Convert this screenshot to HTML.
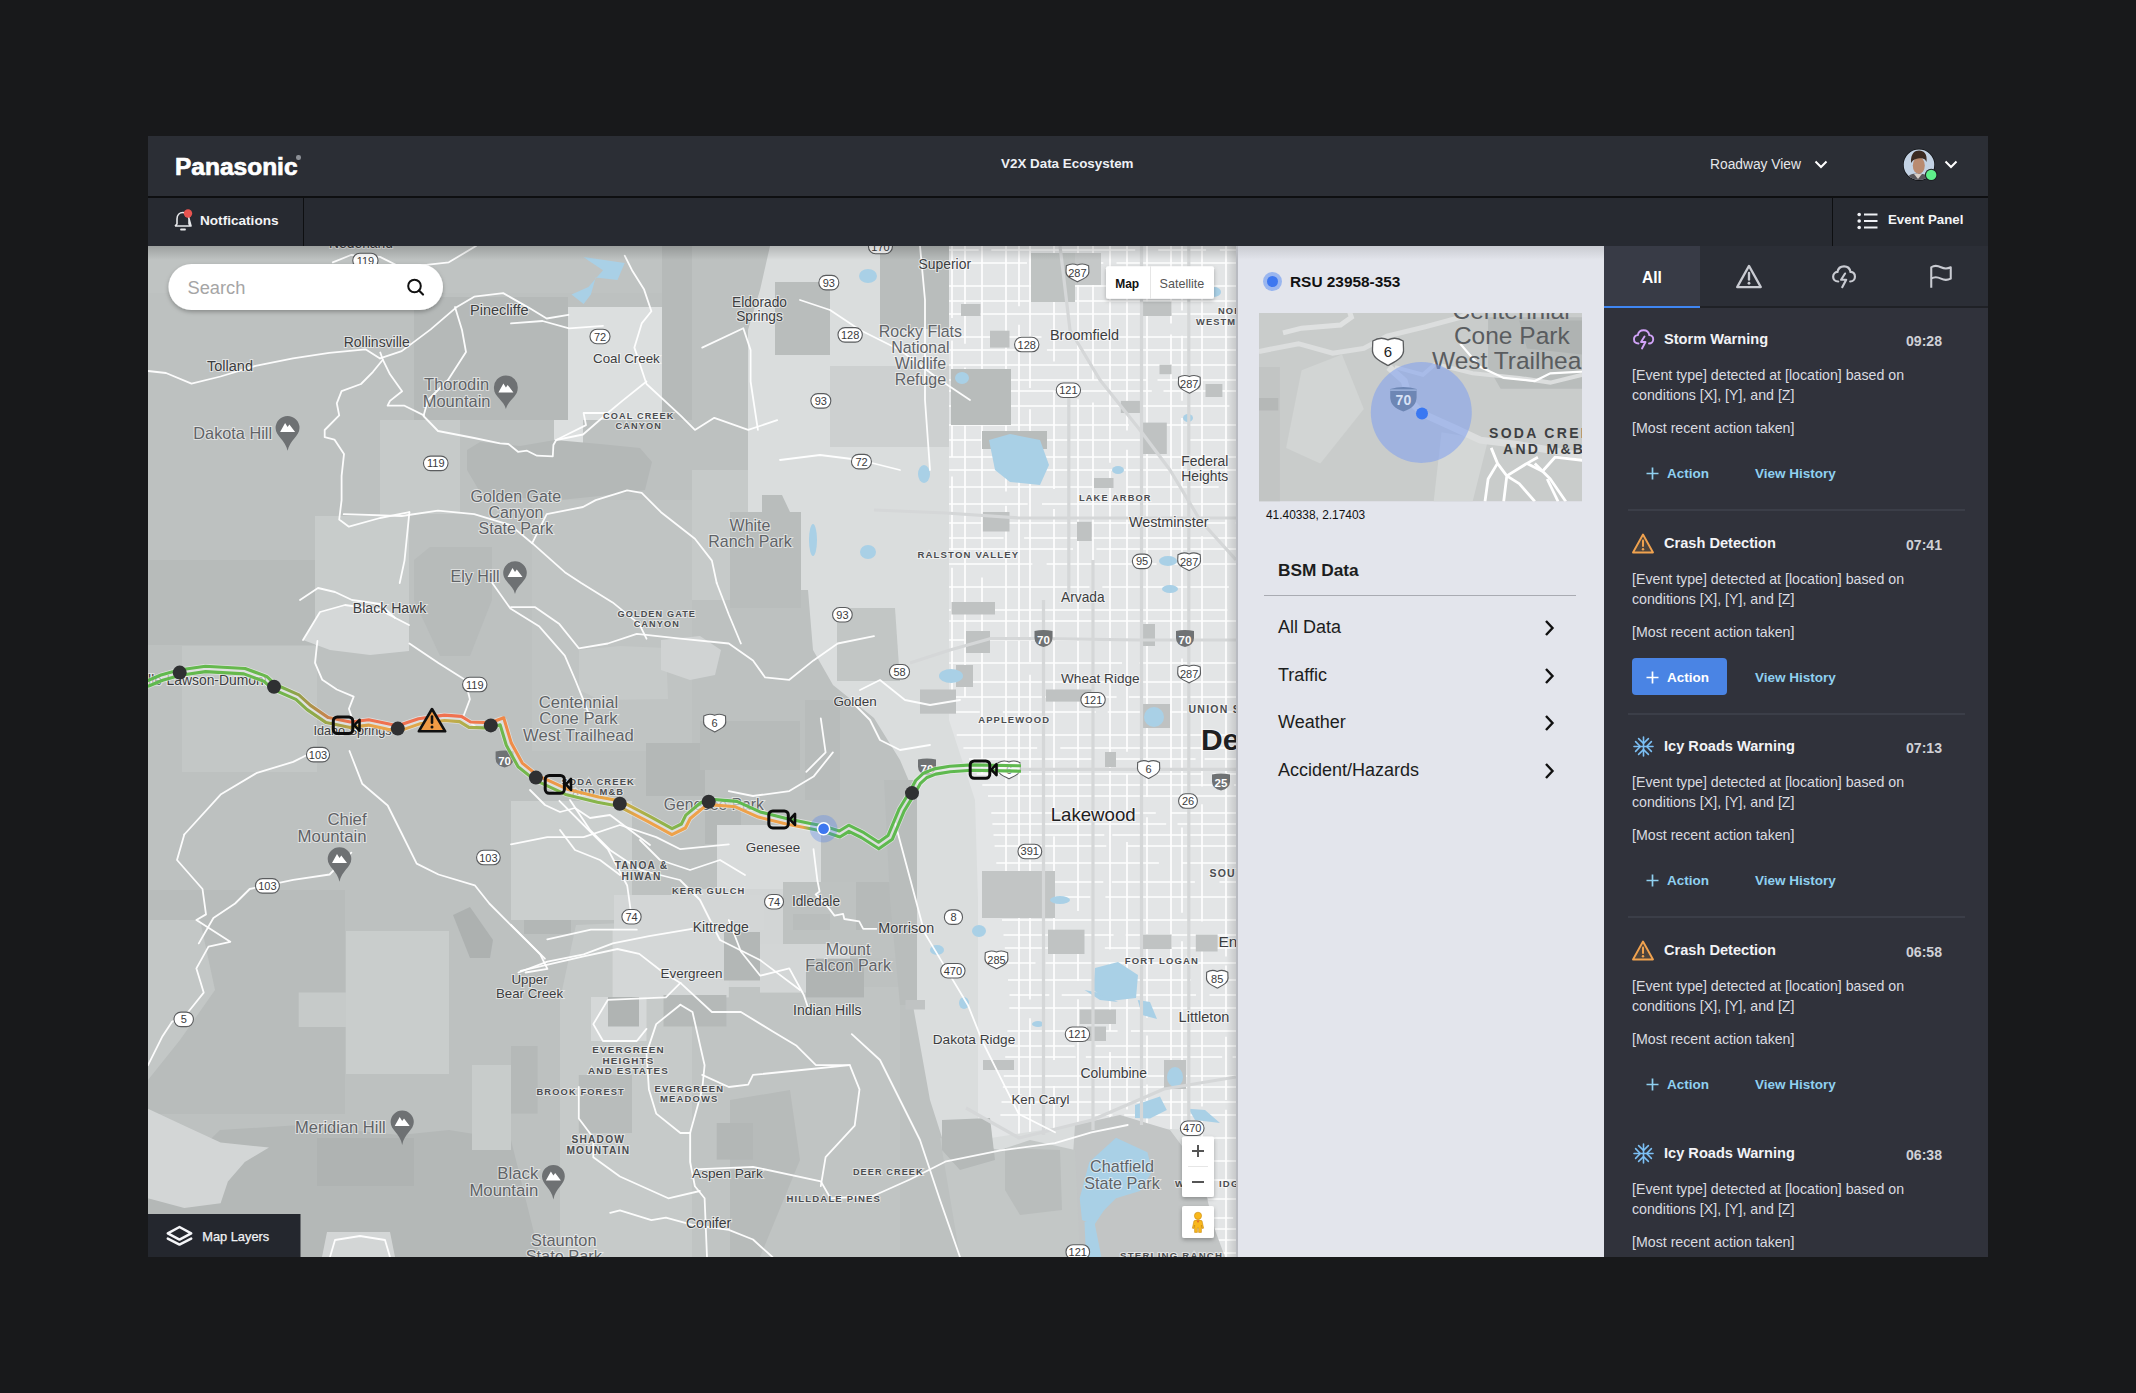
<!DOCTYPE html><html><head><meta charset="utf-8"><style>
*{box-sizing:border-box;margin:0;padding:0}
html,body{width:2136px;height:1393px;overflow:hidden;background:#18191b;font-family:"Liberation Sans",sans-serif}
.a{position:absolute}
.t{position:absolute;white-space:nowrap;line-height:1}
svg{position:absolute;overflow:visible}
</style></head><body><div class="a" style="left:148px;top:136px;width:1840px;height:60px;background:#2b2e35"></div>
<div class="a" style="left:148px;top:196px;width:1840px;height:2px;background:#0e0f11"></div>
<div class="a" style="left:148px;top:198px;width:1840px;height:48px;background:#272a31"></div>
<div class="a" style="left:303px;top:198px;width:1px;height:48px;background:#0e0f11"></div>
<div class="a" style="left:1832px;top:198px;width:1px;height:48px;background:#0e0f11"></div>
<div class="t" style="left:175px;top:154.5px;font-size:24.5px;font-weight:700;color:#fff;letter-spacing:0px;-webkit-text-stroke:0.7px #fff">Panasonic</div>
<div class="a" style="left:296px;top:155px;width:4.5px;height:4.5px;border-radius:50%;background:#8d9097"></div>
<div class="t" style="left:1001px;top:157px;font-size:13.4px;font-weight:700;color:#eef0f5">V2X Data Ecosystem</div>
<div class="t" style="left:1710px;top:158px;font-size:13.8px;color:#e6e7ea">Roadway View</div>
<svg style="left:1814px;top:160px" width="14" height="9" viewBox="0 0 14 9"><path d="M1.5 1.5 L7 7 L12.5 1.5" fill="none" stroke="#fff" stroke-width="2"/></svg>
<svg style="left:1900px;top:145px" width="40" height="40" viewBox="1900 145 40 40"><defs><clipPath id="av"><circle cx="1919" cy="164.7" r="15.3"/></clipPath></defs><circle cx="1919" cy="164.7" r="16" fill="#0d0e10"/><g clip-path="url(#av)"><rect x="1900" y="145" width="40" height="40" fill="#c3d2e4"/><ellipse cx="1918.8" cy="165.5" rx="6" ry="8.5" fill="#b98a70"/><path d="M1911 163 C1910.5 153 1915 150.5 1919 150.5 C1924 150.5 1927.5 154 1926.5 162 L1925 159.5 C1922 157.5 1916 157.5 1912.5 161 Z" fill="#3b2a22"/><path d="M1905 182 C1907 175 1912 173 1918 174 C1925 173 1930 176 1933 182 L1933 186 L1905 186 Z" fill="#58565b"/><path d="M1914 174 L1918 179 L1922 174" fill="#d9cfc8"/></g><circle cx="1931.2" cy="174.9" r="6.2" fill="#1d1f24"/><circle cx="1931.2" cy="174.9" r="5.2" fill="#5fef8a"/></svg>
<svg style="left:1944px;top:160px" width="14" height="9" viewBox="0 0 14 9"><path d="M1.5 1.5 L7 7 L12.5 1.5" fill="none" stroke="#fff" stroke-width="2"/></svg>
<svg style="left:172px;top:209px" width="22" height="24" viewBox="0 0 22 24"><path d="M3 17 L5 15 L5 10 C5 6 7.5 3.5 11 3.5 C12 3.5 12.5 3.7 13 3.9 M16.5 8 L17 10 L17 15 L19 17 Z M3 17 L19 17" fill="none" stroke="#e8e9ec" stroke-width="1.6" stroke-linejoin="round"/><path d="M9 20.5 L13 20.5" stroke="#e8e9ec" stroke-width="1.8" stroke-linecap="round"/><circle cx="16" cy="4.5" r="4.2" fill="#e85450"/></svg>
<div class="t" style="left:200px;top:214px;font-size:13.6px;font-weight:700;color:#f3f4f6">Notfications</div>
<svg style="left:1857px;top:212px" width="22" height="18" viewBox="0 0 22 18"><circle cx="2.2" cy="2.5" r="1.8" fill="#eef0f4"/><circle cx="2.2" cy="9" r="1.8" fill="#eef0f4"/><circle cx="2.2" cy="15.5" r="1.8" fill="#eef0f4"/><path d="M7 2.5H20.5M7 9H20.5M7 15.5H20.5" stroke="#eef0f4" stroke-width="1.8"/></svg>
<div class="t" style="left:1888px;top:213px;font-size:13.3px;font-weight:700;color:#f3f4f6">Event Panel</div>
<div class="a" style="left:1236px;top:246px;width:368px;height:1011px;background:#e3e5ec;overflow:hidden">
<div class="a" style="left:0;top:0;width:368px;height:14px;background:linear-gradient(#c9cbd1,#e3e5ec)"></div>
<div class="a" style="left:0;top:0;width:2px;height:1011px;background:#b9bbc1"></div>
</div>
<div class="a" style="left:1263px;top:272px;width:19px;height:19px;border-radius:50%;background:#9ab6ef"></div>
<div class="a" style="left:1267px;top:276px;width:11px;height:11px;border-radius:50%;background:#3d77f0"></div>
<div class="t" style="left:1290px;top:274px;font-size:15.4px;font-weight:700;color:#111">RSU 23958-353</div>
<svg style="left:0;top:0" width="2136" height="1393" viewBox="0 0 2136 1393">
<defs><clipPath id="mm"><rect x="1259" y="313" width="323" height="188.5"/></clipPath></defs>
<g clip-path="url(#mm)">
<rect x="1259" y="313" width="323" height="188.5" fill="#c9cccb"/>
<polygon points="1258.9,367.1 1279.9,367.1 1279.9,501.5 1258.9,501.5" fill="#c2c5c4"/>
<polygon points="1301.6,370.2 1342.0,354.6 1363.8,409.0 1320.3,463.4 1286.1,447.9" fill="#d2d5d4"/>
<polygon points="1488.1,317.3 1582.2,317.3 1582.2,388.8 1500.6,388.8 1488.1,367.1" fill="#b9bdbc"/>
<polygon points="1519.2,320.4 1582.2,320.4 1582.2,354.6 1527.0,348.4" fill="#afb3b2"/>
<polygon points="1441.5,432.3 1488.1,440.1 1472.6,501.5 1433.7,501.5" fill="#d4d7d6"/>
<polygon points="1258.9,398.1 1278.3,398.1 1278.3,410.6 1258.9,410.6" fill="#b5b8b7"/>
<polyline points="1283.0,332.9 1301.6,328.2 1340.5,325.1 1351.4,317.3 1348.3,308.0" fill="none" stroke="#dfe1e1" stroke-width="5"/>
<polyline points="1258.9,351.5 1298.5,343.7 1332.7,353.1 1363.8,348.4 1387.1,336.0 1426.0,326.7 1460.2,317.3 1480.4,308.0" fill="none" stroke="#dcdede" stroke-width="5"/>
<polyline points="1388.7,367.1 1404.2,381.0 1410.4,401.3 1422.1,413.4 1457.1,429.2 1480.4,440.1 1519.2,444.8 1582.2,455.7" fill="none" stroke="#dcdede" stroke-width="7"/>
<polyline points="1394.9,367.1 1422.9,374.8 1435.3,364.0 1472.6,373.3 1519.2,377.9 1550.3,382.6 1582.2,374.8" fill="none" stroke="#dcdede" stroke-width="4"/>
<polyline points="1460.2,343.7 1480.4,367.1 1503.7,377.9 1534.8,381.0 1550.3,373.3 1582.2,371.7" fill="none" stroke="#fff" stroke-width="2.2"/>
<polyline points="1491.2,447.9 1497.5,463.4 1506.8,475.9 1503.7,501.5" fill="none" stroke="#fff" stroke-width="2.8" stroke-linejoin="round"/>
<polyline points="1506.8,475.9 1527.0,463.4 1537.9,457.2" fill="none" stroke="#fff" stroke-width="2.8" stroke-linejoin="round"/>
<polyline points="1506.8,475.9 1519.2,483.6 1534.8,501.5" fill="none" stroke="#fff" stroke-width="2.8" stroke-linejoin="round"/>
<polyline points="1534.8,463.4 1550.3,479.0 1565.8,501.5" fill="none" stroke="#fff" stroke-width="2.8" stroke-linejoin="round"/>
<polyline points="1527.0,463.4 1542.5,471.2 1555.0,457.2 1582.2,460.3" fill="none" stroke="#fff" stroke-width="2.8" stroke-linejoin="round"/>
<polyline points="1547.2,479.0 1558.1,501.5" fill="none" stroke="#fff" stroke-width="2.8" stroke-linejoin="round"/>
<polyline points="1497.5,463.4 1488.1,479.0 1485.0,501.5" fill="none" stroke="#fff" stroke-width="2.8" stroke-linejoin="round"/>
<g font-family="Liberation Sans" fill="#595c5f" font-size="24.5"><text x="1569.7" y="319" text-anchor="end">Centennial</text><text x="1569.7" y="344" text-anchor="end">Cone Park</text><text x="1432" y="369">West Trailhead</text></g>
<g font-family="Liberation Sans" fill="#3d3f42" font-size="14" font-weight="700" letter-spacing="2.3"><text x="1489" y="437.5">SODA CREEK</text><text x="1503" y="453.5">AND M&amp;B</text></g>
<path d="M1372.8,341.0 C1378.1,337.6 1383.4,337.6 1388.0,339.9 C1392.6,337.6 1397.9,337.6 1403.2,341.0 L1403.5,349.0 C1404.5,357.5 1395.3,361.5 1388.0,365.5 C1380.7,361.5 1371.5,357.5 1372.5,349.0 Z" fill="#fff" stroke="#5a5c5e" stroke-width="1.3"/>
<text x="1388.0" y="357" font-family="Liberation Sans" font-size="15" fill="#222" text-anchor="middle">6</text>
<circle cx="1421.3" cy="412.4" r="50.5" fill="#7d9ef0" fill-opacity="0.55"/>
<path d="M1390.2,389 Q1403.4,385 1416.6000000000001,389 L1416.6000000000001,397 Q1416.6000000000001,407.4 1403.4,411.4 Q1390.2,407.4 1390.2,397 Z" fill="#6d86b4"/>
<rect x="1390.2" y="389.5" width="26.4" height="1.2" fill="#a9bde6"/>
<text x="1403.4" y="405" font-family="Liberation Sans" font-size="14" font-weight="700" fill="#d8e2f6" text-anchor="middle">70</text>
<circle cx="1422" cy="413.4" r="6" fill="#3a78f2"/>
</g></svg>
<div class="t" style="left:1266px;top:510px;font-size:11.9px;color:#111">41.40338, 2.17403</div>
<div class="t" style="left:1278px;top:562px;font-size:17.3px;font-weight:700;color:#1c1d20">BSM Data</div>
<div class="a" style="left:1264px;top:595px;width:312px;height:1px;background:#a9abb2"></div>
<div class="t" style="left:1278px;top:618.0px;font-size:18px;color:#1c1d20">All Data</div>
<svg style="left:1543px;top:619.0px" width="12" height="18" viewBox="0 0 12 18"><path d="M3 2 L9.5 9 L3 16" fill="none" stroke="#111" stroke-width="2.4"/></svg>
<div class="t" style="left:1278px;top:665.5px;font-size:18px;color:#1c1d20">Traffic</div>
<svg style="left:1543px;top:666.5px" width="12" height="18" viewBox="0 0 12 18"><path d="M3 2 L9.5 9 L3 16" fill="none" stroke="#111" stroke-width="2.4"/></svg>
<div class="t" style="left:1278px;top:713.0px;font-size:18px;color:#1c1d20">Weather</div>
<svg style="left:1543px;top:714.0px" width="12" height="18" viewBox="0 0 12 18"><path d="M3 2 L9.5 9 L3 16" fill="none" stroke="#111" stroke-width="2.4"/></svg>
<div class="t" style="left:1278px;top:760.5px;font-size:18px;color:#1c1d20">Accident/Hazards</div>
<svg style="left:1543px;top:761.5px" width="12" height="18" viewBox="0 0 12 18"><path d="M3 2 L9.5 9 L3 16" fill="none" stroke="#111" stroke-width="2.4"/></svg>
<div class="a" style="left:1604px;top:246px;width:384px;height:1011px;background:#30323b;overflow:hidden"></div>
<div class="a" style="left:1604px;top:246px;width:384px;height:60px;background:#2b2e36"></div>
<div class="a" style="left:1604px;top:246px;width:96px;height:60px;background:#383b46"></div>
<div class="a" style="left:1604px;top:306px;width:384px;height:2px;background:#1f2126"></div>
<div class="a" style="left:1604px;top:306px;width:96px;height:2px;background:#3f86f2"></div>
<div class="t" style="left:1642px;top:270px;font-size:15.6px;font-weight:700;color:#fff">All</div>
<svg style="left:1736px;top:264px" width="26" height="25" viewBox="0 0 22 21"><path d="M11 1.5 L21 19.5 L1 19.5 Z" fill="none" stroke="#c9cbd2" stroke-width="1.9" stroke-linejoin="round"/><path d="M11 7.5 V13" stroke="#c9cbd2" stroke-width="2" stroke-linecap="round"/><circle cx="11" cy="16.2" r="1.2" fill="#c9cbd2"/></svg>
<svg style="left:1831.5px;top:264.5px" width="25" height="25" viewBox="0 0 22 22"><path d="M5.5 14.5 C2.5 14.5 1 12.5 1 10.3 C1 8 2.7 6.3 4.8 6.1 C5.3 3.3 7.6 1.2 10.6 1.2 C13.6 1.2 15.8 3.3 16.3 6.1 C18.6 6.3 20.2 8.1 20.2 10.3 C20.2 12.6 18.5 14.5 16 14.5" fill="none" stroke="#c9cbd2" stroke-width="1.9" stroke-linecap="round"/><path d="M11.5 7.5 L8 13 L12.5 13 L9 19.5" fill="none" stroke="#c9cbd2" stroke-width="1.9" stroke-linecap="round" stroke-linejoin="round"/></svg>
<svg style="left:1929px;top:264px" width="24" height="26" viewBox="0 0 22 24"><path d="M2 22 V3 C5 1 8 1.5 11 3 C14 4.5 17 4.5 20 3 V13.5 C17 15 14 15 11 13.5 C8 12 5 11.5 2 13.5" fill="none" stroke="#c9cbd2" stroke-width="1.9" stroke-linejoin="round"/></svg>
<div class="a" style="left:1604px;top:308px;width:384px;height:949px;overflow:hidden">
<svg style="left:29px;top:21px" width="22" height="22" viewBox="0 0 22 22"><path d="M5.5 14.5 C2.5 14.5 1 12.5 1 10.3 C1 8 2.7 6.3 4.8 6.1 C5.3 3.3 7.6 1.2 10.6 1.2 C13.6 1.2 15.8 3.3 16.3 6.1 C18.6 6.3 20.2 8.1 20.2 10.3 C20.2 12.6 18.5 14.5 16 14.5" fill="none" stroke="#d1a3f8" stroke-width="1.9" stroke-linecap="round"/><path d="M11.5 7.5 L8 13 L12.5 13 L9 19.5" fill="none" stroke="#d1a3f8" stroke-width="1.9" stroke-linecap="round" stroke-linejoin="round"/></svg>
<div class="t" style="left:60px;top:24.30000000000001px;font-size:14.6px;font-weight:700;color:#f2f3f6">Storm Warning</div>
<div class="t" style="right:46px;top:26.30000000000001px;font-size:14.1px;font-weight:700;color:#cfd0d6">09:28</div>
<div class="a" style="left:28px;top:56.5px;font-size:14.2px;color:#dadbe0;line-height:20px;white-space:nowrap">[Event type] detected at [location] based on<br>conditions [X], [Y], and [Z]</div>
<div class="t" style="left:28px;top:113px;font-size:14.2px;color:#dadbe0">[Most recent action taken]</div>
<svg style="left:42px;top:159px" width="13" height="13" viewBox="0 0 13 13"><path d="M6.5 0.5V12.5M0.5 6.5H12.5" stroke="#8fd0f0" stroke-width="1.7"/></svg>
<div class="t" style="left:63px;top:159px;font-size:13.5px;font-weight:700;color:#8fd0f0">Action</div>
<div class="t" style="left:151px;top:159px;font-size:13.5px;font-weight:700;color:#8fd0f0">View History</div>
<div class="a" style="left:24px;top:201px;width:337px;height:2px;background:#3b3e48"></div>
<svg style="left:28px;top:225px" width="22" height="22" viewBox="0 0 22 22"><path d="M11 1.5 L21 19.5 L1 19.5 Z" fill="#4d443d" stroke="#f0a24f" stroke-width="1.9" stroke-linejoin="round"/><path d="M11 7.5 V13" stroke="#f0a24f" stroke-width="2" stroke-linecap="round"/><circle cx="11" cy="16.2" r="1.2" fill="#f0a24f"/></svg>
<div class="t" style="left:60px;top:228.3px;font-size:14.6px;font-weight:700;color:#f2f3f6">Crash Detection</div>
<div class="t" style="right:46px;top:230.3px;font-size:14.1px;font-weight:700;color:#cfd0d6">07:41</div>
<div class="a" style="left:28px;top:260.5px;font-size:14.2px;color:#dadbe0;line-height:20px;white-space:nowrap">[Event type] detected at [location] based on<br>conditions [X], [Y], and [Z]</div>
<div class="t" style="left:28px;top:317px;font-size:14.2px;color:#dadbe0">[Most recent action taken]</div>
<div class="a" style="left:28px;top:350px;width:95px;height:37px;border-radius:4px;background:#4a84e4"></div>
<svg style="left:42px;top:363px" width="13" height="13" viewBox="0 0 13 13"><path d="M6.5 0.5V12.5M0.5 6.5H12.5" stroke="#ffffff" stroke-width="1.7"/></svg>
<div class="t" style="left:63px;top:363px;font-size:13.5px;font-weight:700;color:#ffffff">Action</div>
<div class="t" style="left:151px;top:363px;font-size:13.5px;font-weight:700;color:#8fd0f0">View History</div>
<div class="a" style="left:24px;top:405px;width:337px;height:2px;background:#3b3e48"></div>
<svg style="left:28.5px;top:427.5px" width="21" height="21" viewBox="0 0 21 21"><g stroke="#7cc0f5" stroke-width="1.6" stroke-linecap="round" stroke-linejoin="round" fill="none"><path d="M10.5 1V20M1 10.5H20"/><path d="M5.6 2.6L10.5 7.3L15.4 2.6M5.6 18.4L10.5 13.7L15.4 18.4M2.6 5.6L7.3 10.5L2.6 15.4M18.4 5.6L13.7 10.5L18.4 15.4"/></g></svg>
<div class="t" style="left:60px;top:431.3px;font-size:14.6px;font-weight:700;color:#f2f3f6">Icy Roads Warning</div>
<div class="t" style="right:46px;top:433.3px;font-size:14.1px;font-weight:700;color:#cfd0d6">07:13</div>
<div class="a" style="left:28px;top:463.5px;font-size:14.2px;color:#dadbe0;line-height:20px;white-space:nowrap">[Event type] detected at [location] based on<br>conditions [X], [Y], and [Z]</div>
<div class="t" style="left:28px;top:520px;font-size:14.2px;color:#dadbe0">[Most recent action taken]</div>
<svg style="left:42px;top:566px" width="13" height="13" viewBox="0 0 13 13"><path d="M6.5 0.5V12.5M0.5 6.5H12.5" stroke="#8fd0f0" stroke-width="1.7"/></svg>
<div class="t" style="left:63px;top:566px;font-size:13.5px;font-weight:700;color:#8fd0f0">Action</div>
<div class="t" style="left:151px;top:566px;font-size:13.5px;font-weight:700;color:#8fd0f0">View History</div>
<div class="a" style="left:24px;top:608px;width:337px;height:2px;background:#3b3e48"></div>
<svg style="left:28px;top:632px" width="22" height="22" viewBox="0 0 22 22"><path d="M11 1.5 L21 19.5 L1 19.5 Z" fill="#4d443d" stroke="#f0a24f" stroke-width="1.9" stroke-linejoin="round"/><path d="M11 7.5 V13" stroke="#f0a24f" stroke-width="2" stroke-linecap="round"/><circle cx="11" cy="16.2" r="1.2" fill="#f0a24f"/></svg>
<div class="t" style="left:60px;top:635.3px;font-size:14.6px;font-weight:700;color:#f2f3f6">Crash Detection</div>
<div class="t" style="right:46px;top:637.3px;font-size:14.1px;font-weight:700;color:#cfd0d6">06:58</div>
<div class="a" style="left:28px;top:667.5px;font-size:14.2px;color:#dadbe0;line-height:20px;white-space:nowrap">[Event type] detected at [location] based on<br>conditions [X], [Y], and [Z]</div>
<div class="t" style="left:28px;top:724px;font-size:14.2px;color:#dadbe0">[Most recent action taken]</div>
<svg style="left:42px;top:770px" width="13" height="13" viewBox="0 0 13 13"><path d="M6.5 0.5V12.5M0.5 6.5H12.5" stroke="#8fd0f0" stroke-width="1.7"/></svg>
<div class="t" style="left:63px;top:770px;font-size:13.5px;font-weight:700;color:#8fd0f0">Action</div>
<div class="t" style="left:151px;top:770px;font-size:13.5px;font-weight:700;color:#8fd0f0">View History</div>
<svg style="left:28.5px;top:834.5px" width="21" height="21" viewBox="0 0 21 21"><g stroke="#7cc0f5" stroke-width="1.6" stroke-linecap="round" stroke-linejoin="round" fill="none"><path d="M10.5 1V20M1 10.5H20"/><path d="M5.6 2.6L10.5 7.3L15.4 2.6M5.6 18.4L10.5 13.7L15.4 18.4M2.6 5.6L7.3 10.5L2.6 15.4M18.4 5.6L13.7 10.5L18.4 15.4"/></g></svg>
<div class="t" style="left:60px;top:838.3px;font-size:14.6px;font-weight:700;color:#f2f3f6">Icy Roads Warning</div>
<div class="t" style="right:46px;top:840.3px;font-size:14.1px;font-weight:700;color:#cfd0d6">06:38</div>
<div class="a" style="left:28px;top:870.5px;font-size:14.2px;color:#dadbe0;line-height:20px;white-space:nowrap">[Event type] detected at [location] based on<br>conditions [X], [Y], and [Z]</div>
<div class="t" style="left:28px;top:927px;font-size:14.2px;color:#dadbe0">[Most recent action taken]</div>
<svg style="left:42px;top:973px" width="13" height="13" viewBox="0 0 13 13"><path d="M6.5 0.5V12.5M0.5 6.5H12.5" stroke="#8fd0f0" stroke-width="1.7"/></svg>
<div class="t" style="left:63px;top:973px;font-size:13.5px;font-weight:700;color:#8fd0f0">Action</div>
<div class="t" style="left:151px;top:973px;font-size:13.5px;font-weight:700;color:#8fd0f0">View History</div>
</div>
<svg style="left:0;top:0" width="2136" height="1393" viewBox="0 0 2136 1393">
<style>.lb{font-family:"Liberation Sans",sans-serif;paint-order:stroke;stroke:#fff;stroke-opacity:0.55;stroke-width:2px}.sh{font-family:"Liberation Sans",sans-serif}.sh2{font-family:"Liberation Sans",sans-serif}</style>
<defs><clipPath id="mc"><rect x="148" y="246" width="1088" height="1011"/></clipPath><linearGradient id="topsh" x1="0" y1="0" x2="0" y2="1"><stop offset="0" stop-color="#000" stop-opacity="0.18"/><stop offset="1" stop-color="#000" stop-opacity="0"/></linearGradient><linearGradient id="rsh" x1="0" y1="0" x2="1" y2="0"><stop offset="0" stop-color="#000" stop-opacity="0"/><stop offset="1" stop-color="#000" stop-opacity="0.12"/></linearGradient><pattern id="grid" patternUnits="userSpaceOnUse" width="17" height="15"><rect width="17" height="15" fill="none"/><path d="M0 0.7H17M0.7 0V15" stroke="#fff" stroke-width="1.4"/></pattern><clipPath id="urb"><polygon points="949,246 1236,246 1236,1257 1195,1257 1195,1130 1075,1125 978,1140 978,900 975,800 949,720"/></clipPath><filter id="ds" x="-10%" y="-30%" width="120%" height="170%"><feDropShadow dx="0" dy="2" stdDeviation="2" flood-opacity="0.28"/></filter></defs>
<g clip-path="url(#mc)">
<rect x="148" y="246" width="1088" height="1011" fill="#bdc1c0"/>
<rect x="148" y="246" width="544" height="47" fill="#bfc3c2"/>
<polygon points="414,297 568,297 568,420 460,420 460,424 414,424" fill="#b5b9b8"/>
<polygon points="568,307 662,307 662,420 583,420 583,456 554,456 554,420 568,420" fill="#dcdfdf"/>
<rect x="662" y="246" width="30" height="174" fill="#b6bab9"/>
<rect x="380" y="420" width="80" height="94" fill="#c6cac9"/>
<polygon points="467,450 480,442 520,446 555,440 600,444 640,448 652,462 645,490 600,496 560,500 520,498 480,492 467,470" fill="#b4b8b7"/>
<polygon points="414,560 430,547 492,547 492,600 470,656 440,656 414,600" fill="#b7bbba"/>
<rect x="315" y="516" width="94" height="129" fill="#c8cccb"/>
<rect x="148" y="560" width="167" height="85" fill="#b7bbba"/>
<rect x="182" y="646" width="135" height="126" fill="#c3c7c6"/>
<polygon points="303,640 320,612 345,605 380,610 409,625 409,651 370,655 330,650" fill="#d5d8d8"/>
<polygon points="532,500 692,500 692,751 532,751" fill="#c0c4c3"/>
<rect x="148" y="890" width="197" height="224" fill="#b8bcbb"/>
<rect x="346" y="931" width="103" height="143" fill="#c9cdcc"/>
<rect x="298.7" y="992.5" width="47.30000000000001" height="34.5" fill="#c6cac9"/>
<polygon points="453,915 470,907 493,940 490,958 470,958" fill="#adb1b0"/>
<rect x="524" y="889" width="47" height="45" fill="#b3b7b6"/>
<polygon points="220,1130 300,1125 400,1135 449,1130 511,1140 540,1257 148,1257 148,1200" fill="#b4b8b7"/>
<rect x="317" y="1138" width="97" height="48" fill="#afb3b2"/>
<polygon points="148,1108.8 184.3,1125.7 220.6,1142.6 269,1147.5 244.8,1162 227.9,1181.4 220.6,1203.2 184.3,1208 148,1198.3" fill="#d3d6d6"/>
<polygon points="148,920 200,920 215,990 180,1040 148,1080" fill="#c3c7c6"/>
<rect x="472" y="1065" width="39" height="85" fill="#c8cccb"/>
<polygon points="327,1232 390,1232 395,1257 322,1257" fill="#d3d6d6"/>
<polygon points="576,925 692,920 692,1257 560,1257 560,1000" fill="#c6cac9"/>
<rect x="511" y="801" width="121" height="119" fill="#cbcfce"/>
<polygon points="579,650 620,646 666,648 668,699 600,700 579,690" fill="#c6cac9"/>
<polygon points="661,640 700,636 721,650 715,675 690,680 661,670" fill="#d0d3d3"/>
<rect x="646" y="743" width="59" height="53" fill="#b4b8b7"/>
<rect x="805" y="700" width="35" height="100" fill="#b8bcbb"/>
<rect x="700" y="721" width="100" height="49" fill="#b7bbba"/>
<rect x="705" y="801" width="36" height="43" fill="#b5b9b8"/>
<rect x="717" y="825" width="104" height="95" fill="#d8dbdb"/>
<rect x="692" y="889" width="91" height="98" fill="#d2d5d5"/>
<rect x="614" y="895" width="150" height="35" fill="#d3d6d6"/>
<rect x="692" y="987" width="208" height="270" fill="#c0c4c3"/>
<rect x="783" y="882" width="112" height="76" fill="#bec2c1"/>
<rect x="856" y="882" width="37" height="48" fill="#b6bab9"/>
<rect x="793" y="914" width="37" height="16" fill="#b9bdbc"/>
<polygon points="730,1100 790,1090 800,1160 760,1257 730,1257" fill="#b7bbba"/>
<rect x="612.6" y="929.7" width="116.19999999999993" height="67.69999999999993" fill="#d4d7d7"/>
<rect x="591" y="997" width="55.5" height="44" fill="#d5d8d8"/>
<rect x="760" y="944" width="90" height="48.60000000000002" fill="#d3d6d6"/>
<rect x="608" y="997" width="31" height="29.5" fill="#b0b4b3"/>
<rect x="663.5" y="995" width="62.89999999999998" height="31.5" fill="#b5b9b8"/>
<rect x="724" y="932" width="36" height="48.5" fill="#b3b7b6"/>
<rect x="806" y="958.7" width="58" height="38.69999999999993" fill="#b0b4b3"/>
<rect x="716.7" y="1123" width="36.299999999999955" height="36.59999999999991" fill="#b3b7b6"/>
<rect x="748" y="1179" width="34" height="14.5" fill="#b7bbba"/>
<rect x="511" y="1046" width="26.600000000000023" height="67.59999999999991" fill="#b5b9b8"/>
<rect x="578.8" y="1075" width="53.200000000000045" height="58" fill="#b8bcbb"/>
<polygon points="770,246 1236,246 1236,1257 970,1257 946,1150 930,1100 912,1000 917,900 917,800 900,760 874,718 833,685 813,650 808,590 760,590 748,560 748,330 760,290" fill="#dadddd"/>
<rect x="775" y="282" width="55" height="73" fill="#b9bdbc"/>
<rect x="880" y="246" width="69" height="83" fill="#b9bdbc"/>
<rect x="830" y="366" width="119" height="81" fill="#cdd0d0"/>
<rect x="692" y="470" width="56" height="130" fill="#c6cac9"/>
<polygon points="730,512 762,512 762,495 782,495 790,512 801,512 801,608 730,608" fill="#b9bdbc"/>
<polygon points="837,608 895,608 900,681 837,681" fill="#c2c6c5"/>
<polygon points="884,780 917,780 917,1005 900,1005 890,900" fill="#b9bdbc"/>
<polygon points="949,246 1236,246 1236,1257 1195,1257 1195,1130 1075,1125 978,1140 978,900 975,800 949,720" fill="#e3e5e6"/>
<g clip-path="url(#urb)"><path d="M952.0 246.0V318.1 M952.0 340.4V379.8 M952.0 379.8V457.4 M952.0 476.5V511.4 M952.0 511.4V550.5 M952.0 567.8V705.3 M965.0 246.0V289.4 M965.0 289.4V343.8 M965.0 367.5V470.9 M965.0 470.9V565.4 M965.0 565.4V696.4 M982.0 246.0V281.1 M982.0 281.1V410.5 M982.0 410.5V554.3 M982.0 577.6V684.9 M982.0 684.9V774.2 M1006.0 246.0V321.1 M1006.0 321.1V397.3 M1006.0 397.3V491.5 M1006.0 505.8V631.8 M1006.0 631.8V781.0 M1006.0 781.0V832.6 M1006.0 832.6V898.7 M1019.0 246.0V306.2 M1019.0 324.8V431.4 M1019.0 439.5V524.0 M1019.0 524.0V627.6 M1019.0 627.6V747.4 M1019.0 747.4V857.6 M1019.0 857.6V894.7 M1019.0 894.7V1026.1 M1019.0 1026.1V1159.8 M1019.0 1159.8V1241.6 M1030.0 246.0V300.8 M1030.0 300.8V388.1 M1030.0 409.3V452.6 M1030.0 452.6V552.3 M1030.0 552.3V662.1 M1030.0 674.7V753.6 M1030.0 753.6V907.8 M1030.0 907.8V999.5 M1030.0 1018.2V1175.3 M1030.0 1175.3V1245.9 M1054.0 246.0V310.4 M1054.0 310.4V361.4 M1054.0 390.3V489.0 M1054.0 509.0V542.5 M1054.0 542.5V699.7 M1054.0 699.7V820.2 M1054.0 836.2V888.0 M1054.0 888.0V987.2 M1054.0 987.2V1060.1 M1054.0 1085.9V1243.9 M1054.0 1243.9V1257.0 M1078.0 246.0V380.4 M1078.0 399.3V524.3 M1078.0 524.3V657.0 M1078.0 657.0V712.2 M1078.0 712.2V786.9 M1078.0 786.9V911.0 M1078.0 940.4V980.9 M1078.0 999.2V1073.1 M1078.0 1073.1V1231.2 M1078.0 1231.2V1257.0 M1093.0 246.0V380.0 M1093.0 402.5V550.8 M1093.0 550.8V678.3 M1093.0 678.3V731.5 M1093.0 731.5V804.7 M1093.0 804.7V961.0 M1093.0 961.0V1043.2 M1093.0 1043.2V1167.4 M1093.0 1178.2V1227.9 M1093.0 1227.9V1257.0 M1110.0 246.0V361.4 M1110.0 361.4V462.8 M1110.0 471.1V627.3 M1110.0 627.3V725.8 M1110.0 725.8V812.2 M1110.0 812.2V949.6 M1110.0 963.1V1031.2 M1110.0 1052.1V1115.8 M1110.0 1115.8V1162.8 M1110.0 1162.8V1238.8 M1110.0 1238.8V1257.0 M1127.0 246.0V383.5 M1127.0 383.5V430.5 M1127.0 449.8V593.2 M1127.0 593.2V702.3 M1127.0 702.3V751.8 M1127.0 773.4V819.1 M1127.0 842.1V941.1 M1127.0 941.1V1072.0 M1127.0 1072.0V1109.4 M1127.0 1118.3V1161.0 M1127.0 1161.0V1194.7 M1127.0 1194.7V1232.9 M1147.0 246.0V342.6 M1147.0 342.6V431.4 M1147.0 431.4V523.5 M1147.0 523.5V644.4 M1147.0 644.4V796.9 M1147.0 817.2V969.8 M1147.0 969.8V1017.7 M1147.0 1035.4V1074.8 M1147.0 1084.4V1201.5 M1147.0 1201.5V1257.0 M1171.0 246.0V323.6 M1171.0 334.6V425.4 M1171.0 425.4V467.7 M1171.0 467.7V518.8 M1171.0 518.8V577.9 M1171.0 577.9V737.1 M1171.0 737.1V821.9 M1171.0 821.9V863.9 M1171.0 863.9V937.8 M1171.0 937.8V1059.2 M1171.0 1059.2V1156.5 M1171.0 1185.6V1230.3 M1171.0 1230.3V1257.0 M1182.0 246.0V310.5 M1182.0 335.7V400.8 M1182.0 418.1V566.6 M1182.0 566.6V630.2 M1182.0 658.4V762.6 M1182.0 762.6V804.2 M1182.0 827.4V912.7 M1182.0 941.3V1053.8 M1182.0 1053.8V1094.7 M1182.0 1094.7V1133.3 M1182.0 1133.3V1222.3 M1182.0 1242.5V1257.0 M1202.0 246.0V368.2 M1202.0 368.2V524.2 M1202.0 536.2V687.4 M1202.0 687.4V786.5 M1202.0 804.3V921.6 M1202.0 947.3V1106.6 M1202.0 1115.0V1210.7 M1202.0 1210.7V1257.0 M1226.0 246.0V382.5 M1226.0 382.5V476.8 M1226.0 476.8V557.9 M1226.0 557.9V677.3 M1226.0 677.3V751.9 M1226.0 751.9V873.7 M1226.0 873.7V956.4 M1226.0 965.6V1012.4 M1226.0 1036.7V1100.0 M1226.0 1109.8V1249.2 M1226.0 1249.2V1257.0 M949.0 250.0H978.7 M991.3 250.0H1016.7 M1016.7 250.0H1076.2 M1076.2 250.0H1135.2 M1158.2 250.0H1206.1 M1219.8 250.0H1236.0 M949.0 263.0H1027.0 M1039.5 263.0H1073.9 M1073.9 263.0H1103.3 M1116.5 263.0H1165.9 M1165.9 263.0H1236.0 M949.0 286.0H1067.7 M1067.7 286.0H1155.4 M1155.4 286.0H1236.0 M949.0 301.0H1050.0 M1050.0 301.0H1079.6 M1079.6 301.0H1198.3 M1198.3 301.0H1236.0 M949.0 314.0H1069.5 M1069.5 314.0H1154.2 M1154.2 314.0H1180.9 M1180.9 314.0H1236.0 M949.0 337.0H1041.5 M1050.2 337.0H1142.1 M1142.1 337.0H1206.7 M1206.7 337.0H1236.0 M949.0 350.0H1025.4 M1046.9 350.0H1150.5 M1150.5 350.0H1231.7 M1231.7 350.0H1236.0 M949.0 365.0H1059.0 M1059.0 365.0H1108.6 M1108.6 365.0H1157.8 M1157.8 365.0H1231.2 M1231.2 365.0H1236.0 M949.0 380.0H1054.5 M1054.5 380.0H1147.0 M1157.5 380.0H1209.2 M1209.2 380.0H1236.0 M949.0 391.0H1024.7 M1024.7 391.0H1151.8 M1163.5 391.0H1236.0 M949.0 406.0H1022.8 M1022.8 406.0H1060.2 M1060.2 406.0H1106.2 M1106.2 406.0H1229.5 M949.0 425.0H1075.7 M1075.7 425.0H1128.9 M1152.9 425.0H1200.1 M1200.1 425.0H1236.0 M949.0 440.0H987.9 M987.9 440.0H1066.3 M1066.3 440.0H1165.2 M1188.5 440.0H1236.0 M949.0 457.0H1045.6 M1045.6 457.0H1146.9 M1146.9 457.0H1211.4 M1225.0 457.0H1236.0 M949.0 470.0H1048.9 M1048.9 470.0H1104.3 M1104.3 470.0H1170.6 M1170.6 470.0H1236.0 M949.0 487.0H1053.3 M1053.3 487.0H1107.8 M1127.1 487.0H1218.7 M949.0 504.0H1027.7 M1042.0 504.0H1167.4 M1167.4 504.0H1236.0 M949.0 523.0H1031.7 M1031.7 523.0H1061.9 M1061.9 523.0H1134.2 M1134.2 523.0H1226.9 M1235.7 523.0H1236.0 M949.0 538.0H1003.6 M1024.1 538.0H1117.7 M1117.7 538.0H1167.7 M1167.7 538.0H1236.0 M949.0 549.0H995.8 M995.8 549.0H1073.0 M1096.4 549.0H1226.1 M1226.1 549.0H1236.0 M949.0 564.0H1032.4 M1046.6 564.0H1156.6 M1165.0 564.0H1236.0 M949.0 587.0H1029.0 M1029.0 587.0H1089.5 M1102.3 587.0H1228.9 M949.0 610.0H1057.0 M1057.0 610.0H1091.7 M1091.7 610.0H1157.1 M1157.1 610.0H1227.4 M949.0 621.0H987.4 M987.4 621.0H1092.5 M1092.5 621.0H1219.2 M1219.2 621.0H1236.0 M949.0 640.0H1063.8 M1063.8 640.0H1114.9 M1125.5 640.0H1205.4 M1205.4 640.0H1236.0 M949.0 663.0H1062.9 M1062.9 663.0H1096.8 M1096.8 663.0H1122.0 M1139.6 663.0H1168.6 M1168.6 663.0H1236.0 M949.0 682.0H1040.8 M1040.8 682.0H1077.6 M1094.5 682.0H1180.7 M1180.7 682.0H1229.2 M1229.2 682.0H1236.0 M949.0 697.0H1041.7 M1041.7 697.0H1116.6 M1128.8 697.0H1236.0 M949.0 712.0H979.8 M1002.8 712.0H1095.8 M1107.7 712.0H1177.2 M1177.2 712.0H1236.0 M956.7 735.0H1025.8 M1025.8 735.0H1071.6 M1071.6 735.0H1174.3 M1174.3 735.0H1220.8 M1220.8 735.0H1236.0 M963.4 748.0H1037.2 M1060.3 748.0H1096.8 M1096.8 748.0H1185.8 M1185.8 748.0H1236.0 M969.0 759.0H1093.6 M1108.3 759.0H1155.7 M1155.7 759.0H1195.6 M1204.6 759.0H1236.0 M976.7 774.0H1078.6 M1078.6 774.0H1201.4 M1212.6 774.0H1236.0 M982.3 785.0H1040.1 M1040.1 785.0H1153.2 M1153.2 785.0H1224.6 M1233.9 785.0H1236.0 M988.0 796.0H1071.9 M1071.9 796.0H1136.8 M1136.8 796.0H1194.2 M1194.2 796.0H1228.4 M1228.4 796.0H1236.0 M991.3 813.0H1036.6 M1036.6 813.0H1155.8 M1170.7 813.0H1236.0 M992.4 824.0H1056.8 M1056.8 824.0H1166.2 M1177.5 824.0H1209.1 M1209.1 824.0H1236.0 M993.5 835.0H1046.0 M1046.0 835.0H1104.3 M1112.3 835.0H1216.7 M1216.7 835.0H1236.0 M994.6 846.0H1106.3 M1126.5 846.0H1200.4 M1200.4 846.0H1236.0 M996.3 863.0H1035.2 M1035.2 863.0H1061.1 M1061.1 863.0H1118.0 M1118.0 863.0H1158.9 M1181.5 863.0H1236.0 M998.2 882.0H1031.5 M1052.3 882.0H1103.3 M1111.8 882.0H1194.9 M1219.5 882.0H1236.0 M999.7 897.0H1090.3 M1105.4 897.0H1234.2 M1234.2 897.0H1236.0 M1002.0 920.0H1051.7 M1051.7 920.0H1157.9 M1157.9 920.0H1236.0 M1003.5 935.0H1067.7 M1067.7 935.0H1113.6 M1125.7 935.0H1166.8 M1166.8 935.0H1236.0 M1004.8 948.0H1083.1 M1104.8 948.0H1198.4 M1198.4 948.0H1234.2 M1234.2 948.0H1236.0 M1006.3 963.0H1035.5 M1045.6 963.0H1090.5 M1090.5 963.0H1176.7 M1176.7 963.0H1236.0 M1008.0 980.0H1096.3 M1096.3 980.0H1191.1 M1210.0 980.0H1236.0 M1009.5 995.0H1049.3 M1061.7 995.0H1149.6 M1149.6 995.0H1196.0 M1209.5 995.0H1236.0 M1009.3 1008.0H1037.6 M1037.6 1008.0H1113.4 M1113.4 1008.0H1222.0 M1222.0 1008.0H1236.0 M1007.4 1031.0H1049.6 M1049.6 1031.0H1117.6 M1130.9 1031.0H1236.0 M1006.2 1046.0H1074.6 M1095.7 1046.0H1204.9 M1204.9 1046.0H1236.0 M1005.2 1057.0H1075.8 M1085.8 1057.0H1120.3 M1120.3 1057.0H1183.6 M1183.6 1057.0H1222.2 M1232.6 1057.0H1236.0 M1003.7 1076.0H1094.0 M1094.0 1076.0H1172.0 M1184.8 1076.0H1236.0 M1002.8 1087.0H1068.0 M1068.0 1087.0H1176.2 M1176.2 1087.0H1232.9 M1232.9 1087.0H1236.0 M1001.5 1102.0H1032.1 M1032.1 1102.0H1097.8 M1097.8 1102.0H1188.0 M1188.0 1102.0H1229.8 M1229.8 1102.0H1236.0 M1000.4 1115.0H1112.5 M1124.2 1115.0H1191.2 M1191.2 1115.0H1236.0 M1001.3 1138.0H1112.0 M1135.0 1138.0H1236.0 M1003.0 1161.0H1116.0 M1134.2 1161.0H1217.0 M1217.0 1161.0H1236.0 M1004.4 1180.0H1055.6 M1055.6 1180.0H1119.1 M1119.1 1180.0H1162.9 M1187.7 1180.0H1236.0 M1005.8 1199.0H1112.7 M1112.7 1199.0H1156.5 M1156.5 1199.0H1192.8 M1208.1 1199.0H1236.0 M1007.2 1218.0H1101.1 M1111.4 1218.0H1233.2 M1008.0 1229.0H1038.7 M1038.7 1229.0H1103.3 M1103.3 1229.0H1142.6 M1142.6 1229.0H1236.0 M1008.8 1240.0H1054.1 M1054.1 1240.0H1130.7 M1130.7 1240.0H1236.0 M1009.7 1253.0H1041.6 M1041.6 1253.0H1146.0 M1169.2 1253.0H1223.1 M1223.1 1253.0H1236.0" stroke="#ffffff" stroke-width="1.7" fill="none" opacity="0.95"/></g>
<rect x="1142.6" y="301.6" width="29.0" height="14.399999999999977" fill="#bfc2c2"/>
<rect x="1205.5" y="384" width="16.90000000000009" height="13" fill="#bfc2c2"/>
<rect x="1142.6" y="422.6" width="24.200000000000045" height="31.399999999999977" fill="#bfc2c2"/>
<rect x="1120.8" y="400.9" width="19.200000000000045" height="12.100000000000023" fill="#bfc2c2"/>
<rect x="1094" y="478" width="19.5" height="10" fill="#bfc2c2"/>
<rect x="1077" y="521.8" width="14.700000000000045" height="19.200000000000045" fill="#bfc2c2"/>
<rect x="1159.5" y="364.6" width="12.099999999999909" height="9.599999999999966" fill="#bfc2c2"/>
<rect x="990" y="330.7" width="19.5" height="16.900000000000034" fill="#bfc2c2"/>
<rect x="961" y="304" width="19.5" height="12" fill="#bfc2c2"/>
<rect x="982.9" y="512" width="26.600000000000023" height="19.5" fill="#bfc2c2"/>
<rect x="951.5" y="602" width="43.5" height="12.5" fill="#bfc2c2"/>
<rect x="966" y="631" width="24" height="22" fill="#bfc2c2"/>
<rect x="956" y="665" width="17" height="22" fill="#bfc2c2"/>
<rect x="920" y="689.5" width="36" height="24.200000000000045" fill="#bfc2c2"/>
<rect x="1045.9" y="689.5" width="46.09999999999991" height="12.100000000000023" fill="#bfc2c2"/>
<rect x="1105" y="752" width="11" height="15" fill="#bfc2c2"/>
<rect x="1142.8" y="624" width="12.200000000000045" height="22" fill="#bfc2c2"/>
<rect x="1142" y="704" width="28" height="24" fill="#bfc2c2"/>
<rect x="951" y="369" width="60" height="56" fill="#b8bcbb"/>
<rect x="982" y="431" width="65" height="18" fill="#b8bcbb"/>
<rect x="1031" y="253" width="44" height="49" fill="#bfc3c2"/>
<rect x="1075" y="253" width="26" height="32" fill="#c5c8c8"/>
<rect x="982" y="871" width="73" height="47" fill="#c2c5c5"/>
<polygon points="1075,1125 1120,1115 1170,1130 1200,1170 1215,1230 1225,1257 1060,1257 1070,1200" fill="#c2c5c5"/>
<polygon points="940,1138 1000,1150 1030,1140 1075,1150 1080,1257 960,1257" fill="#c3c7c6"/>
<polygon points="1005,1148 1060,1150 1062,1210 1020,1215 1005,1190" fill="#b9bdbc"/>
<polygon points="942,1120 990,1118 995,1160 960,1170 942,1150" fill="#b5b9b8"/>
<rect x="1048" y="929.7" width="36.5" height="24.299999999999955" fill="#c0c3c3"/>
<rect x="1142.6" y="934.5" width="29.0" height="14.5" fill="#c0c3c3"/>
<rect x="1195.8" y="934.5" width="21.799999999999955" height="17.0" fill="#c0c3c3"/>
<rect x="1079.7" y="1009.5" width="36.299999999999955" height="14.5" fill="#c0c3c3"/>
<rect x="1087" y="1026.5" width="19" height="14.5" fill="#c0c3c3"/>
<rect x="983" y="1060" width="31" height="10" fill="#c0c3c3"/>
<rect x="1164" y="1060" width="22" height="29" fill="#c0c3c3"/>
<rect x="905.5" y="1000" width="19.5" height="9.5" fill="#c0c3c3"/>
<polygon points="1116,1137.8 1147.4,1152.3 1152.3,1171.6 1140,1191 1116,1198.3 1103.9,1210.4 1094.2,1224.9 1082,1220 1079.7,1198.3 1089.3,1162" fill="#a9d0e6"/>
<polygon points="1084.5,1222 1094,1220 1101.4,1257 1086,1257" fill="#a9d0e6"/>
<polygon points="1084.5,990 1100,993 1118,1002 1100,1000" fill="#a9d0e6"/>
<polygon points="1137.7,1000 1150,1002 1157,1019 1142,1015" fill="#a9d0e6"/>
<polygon points="1135,1105 1160,1096.6 1166.8,1110 1150,1118.4 1135,1118" fill="#a9d0e6"/>
<polygon points="1188.5,1108.7 1205,1110 1220,1123 1195,1120" fill="#a9d0e6"/>
<polygon points="1095,968 1118,962 1138,975 1136,998 1110,1001 1093,990" fill="#a9d0e6"/>
<polygon points="989,440 1010,434 1040,440 1049,465 1040,485 1010,482 995,470" fill="#a9d0e6"/>
<polygon points="583.6,256.9 624.7,263 617.5,279.9 595.7,277.5 590.9,294.4 583.6,304.1 571.5,294.4 588.4,287.1 603,270.2 588.4,260.5" fill="#a9d0e6"/>
<ellipse cx="979" cy="931" rx="7" ry="6" fill="#a9d0e6"/>
<ellipse cx="937" cy="950" rx="7" ry="5" fill="#a9d0e6"/>
<ellipse cx="962" cy="378" rx="7" ry="6" fill="#a9d0e6"/>
<ellipse cx="868" cy="276" rx="9" ry="7" fill="#a9d0e6"/>
<ellipse cx="924" cy="474" rx="6" ry="9" fill="#a9d0e6"/>
<ellipse cx="868" cy="552" rx="8" ry="7" fill="#a9d0e6"/>
<ellipse cx="813" cy="540" rx="4" ry="16" fill="#a9d0e6"/>
<ellipse cx="951" cy="676" rx="12" ry="7" fill="#a9d0e6"/>
<ellipse cx="1168" cy="561" rx="9" ry="5" fill="#a9d0e6"/>
<ellipse cx="1170" cy="589" rx="8" ry="4" fill="#a9d0e6"/>
<ellipse cx="1154" cy="717" rx="10" ry="10" fill="#a9d0e6"/>
<ellipse cx="1214" cy="292" rx="7" ry="5" fill="#a9d0e6"/>
<ellipse cx="1188" cy="418" rx="5" ry="4" fill="#a9d0e6"/>
<ellipse cx="1118" cy="470" rx="6" ry="4" fill="#a9d0e6"/>
<ellipse cx="1060" cy="900" rx="10" ry="4" fill="#a9d0e6"/>
<ellipse cx="1175" cy="1077" rx="8" ry="10" fill="#a9d0e6"/>
<ellipse cx="964" cy="1003" rx="5" ry="6" fill="#a9d0e6"/>
<ellipse cx="1038" cy="1024" rx="6" ry="3" fill="#a9d0e6"/>
<polyline points="874,510 946,513 1019,518 1236,518" fill="none" stroke="#d5d7d8" stroke-width="3.2" stroke-linejoin="round"/>
<polyline points="1068.8,391 1068.8,600" fill="none" stroke="#d5d7d8" stroke-width="3.2" stroke-linejoin="round"/>
<polyline points="910,663 950,650 990,638.7 1043,638.7 1140,640 1236,640" fill="none" stroke="#d5d7d8" stroke-width="3.2" stroke-linejoin="round"/>
<polyline points="922,771.8 994.9,769.4 1100,769.4 1236,769.4" fill="none" stroke="#d5d7d8" stroke-width="3.2" stroke-linejoin="round"/>
<polyline points="1043.5,600 1043.5,1135" fill="none" stroke="#d5d7d8" stroke-width="3.2" stroke-linejoin="round"/>
<polyline points="1093,560 1093,1130" fill="none" stroke="#d5d7d8" stroke-width="3.2" stroke-linejoin="round"/>
<polyline points="966,1108 1019,1138 1092,1120 1164,1089 1236,1077" fill="none" stroke="#d5d7d8" stroke-width="3.2" stroke-linejoin="round"/>
<polyline points="1141.5,246 1141.5,1125" fill="none" stroke="#d5d7d8" stroke-width="3.2" stroke-linejoin="round"/>
<polyline points="1188.8,246 1188.8,1125" fill="none" stroke="#d5d7d8" stroke-width="3.2" stroke-linejoin="round"/>
<polyline points="1060,246 1070,330 1100,380 1140,430 1170,470 1200,520 1236,560" fill="none" stroke="#d5d7d8" stroke-width="3.2" stroke-linejoin="round"/>
<polyline points="332.8,262.3 351,255 380,256.9 401.7,267.7 448.8,262.3 476,246" fill="none" stroke="#fff" stroke-width="1.8" stroke-linejoin="round" stroke-linecap="round" stroke-opacity="0.95"/>
<polyline points="148,371 166,373 191.5,383.7 220.5,376.5 256.7,365.6 293,358.4 329.2,352.9 365.5,349.3 380,358.4" fill="none" stroke="#fff" stroke-width="1.8" stroke-linejoin="round" stroke-linecap="round" stroke-opacity="0.95"/>
<polyline points="380.3,352.5 382.8,359.7 373,371.8 361,384 341.6,391.2 336.8,403.3 339.2,415.4 324.7,430 324.7,437.2 334.4,439.6 344,454.1 341.6,475.9 341.6,500.1 339.2,519.5 348.9,526.7 380,518 409.4,512.2" fill="none" stroke="#fff" stroke-width="1.8" stroke-linejoin="round" stroke-linecap="round" stroke-opacity="0.95"/>
<polyline points="409.4,512.2 404.5,560.6 399.7,583" fill="none" stroke="#fff" stroke-width="1.8" stroke-linejoin="round" stroke-linecap="round" stroke-opacity="0.95"/>
<polyline points="382.8,359.7 390,374.3 402.1,391.2 390,400.9 387.6,405.7 404.5,405.7 423.9,415.4" fill="none" stroke="#fff" stroke-width="1.8" stroke-linejoin="round" stroke-linecap="round" stroke-opacity="0.95"/>
<polyline points="380,358.4 401.7,351.1 430.7,329.4 456,307.6 474.2,296.7 503.2,293.1 528.6,307.6 546.7,318.5 568.4,314.9" fill="none" stroke="#fff" stroke-width="1.8" stroke-linejoin="round" stroke-linecap="round" stroke-opacity="0.95"/>
<polyline points="455,307 462,330 466,352 448,380 428,400 423.5,416 438,431 474.2,438 500,443.4 508.4,444 518,451.8 527,450.7 537,455.7 552.8,456.3 553.4,445 556.2,440 583,434.5 607.8,413" fill="none" stroke="#fff" stroke-width="1.8" stroke-linejoin="round" stroke-linecap="round" stroke-opacity="0.95"/>
<polyline points="343.7,514.2 401.7,516 438,510.6 474.2,514.2 510.4,525.1 532.2,543.2 546.7,514.2 583,507 595.7,500.1 627.2,490.4 641.7,492.8 661,512.2 694.9,538.8 711.9,560.6 716.7,583" fill="none" stroke="#fff" stroke-width="1.8" stroke-linejoin="round" stroke-linecap="round" stroke-opacity="0.95"/>
<polyline points="532.2,543.2 564.8,572.2 581.2,583 612.6,602.4 639.3,624.1 646.5,638.7" fill="none" stroke="#fff" stroke-width="1.8" stroke-linejoin="round" stroke-linecap="round" stroke-opacity="0.95"/>
<polyline points="511,607.2 535.2,607.2 559.4,624.1 578.8,648.3 607.8,643.5 636.8,633.8 680.4,638.7 728.8,643.5 753,660.4 765.1,677.4 789.3,679.8 813.5,660.4 837.7,643.5 874,636.2" fill="none" stroke="#fff" stroke-width="1.8" stroke-linejoin="round" stroke-linecap="round" stroke-opacity="0.95"/>
<polyline points="716.7,583 728.8,614.5 740.9,643.5" fill="none" stroke="#fff" stroke-width="1.8" stroke-linejoin="round" stroke-linecap="round" stroke-opacity="0.95"/>
<polyline points="832.9,752.4 813.5,776.6 789.3,791.1 753,796 728.8,791.1" fill="none" stroke="#fff" stroke-width="1.8" stroke-linejoin="round" stroke-linecap="round" stroke-opacity="0.95"/>
<polyline points="820.8,718.5 825.6,752.4 806.3,771.8" fill="none" stroke="#fff" stroke-width="1.8" stroke-linejoin="round" stroke-linecap="round" stroke-opacity="0.95"/>
<polyline points="559.4,800.8 583.6,825 607.8,849.2 627.2,885.5 632,920" fill="none" stroke="#fff" stroke-width="1.8" stroke-linejoin="round" stroke-linecap="round" stroke-opacity="0.95"/>
<polyline points="511,844.4 547.3,837.1 583.6,837.1 619.9,825 656.2,837.1 680.4,849.2 728.8,844.4" fill="none" stroke="#fff" stroke-width="1.8" stroke-linejoin="round" stroke-linecap="round" stroke-opacity="0.95"/>
<polyline points="813.5,849.2 817.3,880 819.6,891.5 815.6,894.4 828.8,908.1 834.5,915.6 843.1,913.9 844.3,919 859.2,921.3 863.2,928.8 876.4,928.8" fill="none" stroke="#fff" stroke-width="1.8" stroke-linejoin="round" stroke-linecap="round" stroke-opacity="0.95"/>
<polyline points="317.4,641 315,662.9 322.3,679.8 336.8,689.5 353.7,696.7 348.9,708.8 353.7,723.4 356.1,730.6" fill="none" stroke="#fff" stroke-width="1.8" stroke-linejoin="round" stroke-linecap="round" stroke-opacity="0.95"/>
<polyline points="409.4,643.5 438.4,662.9 465,679.8 469.9,699.2 462.6,718.5 474.7,725.8" fill="none" stroke="#fff" stroke-width="1.8" stroke-linejoin="round" stroke-linecap="round" stroke-opacity="0.95"/>
<polyline points="303,640 320,612 345,605 380,610 409,625" fill="none" stroke="#fff" stroke-width="1.8" stroke-linejoin="round" stroke-linecap="round" stroke-opacity="0.95"/>
<polyline points="492.3,583 510.4,608.5 539.4,626.6 564.8,655.6 575.7,681 590.2,717.2" fill="none" stroke="#fff" stroke-width="1.8" stroke-linejoin="round" stroke-linecap="round" stroke-opacity="0.95"/>
<polyline points="624.7,255.7 632,270.2 644.1,289.6 651.4,311.3 641.7,323.4 634.4,347.6 646.5,384 680.4,415.4 694.9,429.9 714.3,417.8 748.2,429.9 777.2,420.2" fill="none" stroke="#fff" stroke-width="1.8" stroke-linejoin="round" stroke-linecap="round" stroke-opacity="0.95"/>
<polyline points="646.5,381.5 622.3,400.9 607.8,413 583.6,413 586,425.1 566.7,434.8 556.2,440" fill="none" stroke="#fff" stroke-width="1.8" stroke-linejoin="round" stroke-linecap="round" stroke-opacity="0.95"/>
<polyline points="511,323.4 542.5,321 569.1,328.3 603,325.9" fill="none" stroke="#fff" stroke-width="1.8" stroke-linejoin="round" stroke-linecap="round" stroke-opacity="0.95"/>
<polyline points="702.2,347.6 743.3,328.3 750.6,350.1 750.6,381.5 757.9,429.9" fill="none" stroke="#fff" stroke-width="1.8" stroke-linejoin="round" stroke-linecap="round" stroke-opacity="0.95"/>
<polyline points="300,600 318,588 335,592 352,600 380,604 395,618" fill="none" stroke="#fff" stroke-width="1.8" stroke-linejoin="round" stroke-linecap="round" stroke-opacity="0.95"/>
<polyline points="349.5,751 362.2,783.7 387.7,805.5 402.2,834.5 416.7,863.6 438.5,874.5 474.8,885.3 489.3,903.5 511.1,925.3 540.2,954.3 547.4,968.9 525.6,972.5" fill="none" stroke="#fff" stroke-width="1.8" stroke-linejoin="round" stroke-linecap="round" stroke-opacity="0.95"/>
<polyline points="351.3,852.7 329.6,874.5 293.2,879.9 249.7,889 235.1,903.5 213.4,918 198.8,943.4" fill="none" stroke="#fff" stroke-width="1.8" stroke-linejoin="round" stroke-linecap="round" stroke-opacity="0.95"/>
<polyline points="184.3,834.5 177,860 202.5,889 206,914.4 196.4,920 230.3,941.8 208.5,946.6 196.4,968.4 203.7,992.6 194,1004.7 184.3,1016.8 172.2,1021.6 162.5,1036.2 148,1065.2" fill="none" stroke="#fff" stroke-width="1.8" stroke-linejoin="round" stroke-linecap="round" stroke-opacity="0.95"/>
<polyline points="330,1257 335,1240 360,1236 385,1240 390,1257" fill="none" stroke="#fff" stroke-width="1.8" stroke-linejoin="round" stroke-linecap="round" stroke-opacity="0.95"/>
<polyline points="184.3,834.5 220.6,794.6 257,772.8 293.2,761.9 315,751" fill="none" stroke="#fff" stroke-width="1.8" stroke-linejoin="round" stroke-linecap="round" stroke-opacity="0.95"/>
<polyline points="518.4,972.5 547.4,961.6 583.7,954.3 612.8,943.4 649,936.2 692,928.9" fill="none" stroke="#fff" stroke-width="1.8" stroke-linejoin="round" stroke-linecap="round" stroke-opacity="0.95"/>
<polyline points="570,800 590,830 610,850 640,870 680,880 700,900 720,940 760,960 800,990" fill="none" stroke="#fff" stroke-width="1.8" stroke-linejoin="round" stroke-linecap="round" stroke-opacity="0.95"/>
<polyline points="511,924.8 544.9,958.7" fill="none" stroke="#fff" stroke-width="1.8" stroke-linejoin="round" stroke-linecap="round" stroke-opacity="0.95"/>
<polyline points="547.3,939.4 590.9,929.7 636.8,929.7" fill="none" stroke="#fff" stroke-width="1.8" stroke-linejoin="round" stroke-linecap="round" stroke-opacity="0.95"/>
<polyline points="520.7,970.8 583.6,956.3 617.5,949 639.3,953.9 661,970.8 680.4,982.9" fill="none" stroke="#fff" stroke-width="1.8" stroke-linejoin="round" stroke-linecap="round" stroke-opacity="0.95"/>
<polyline points="680.4,982.9 665.9,997.4 607.8,999.9 593.3,1024.1 603,1041 636.8,1041 646.5,1028.9" fill="none" stroke="#fff" stroke-width="1.8" stroke-linejoin="round" stroke-linecap="round" stroke-opacity="0.95"/>
<polyline points="680.4,1004.7 656.2,1024.1 646.5,1053.1 648.9,1089.4 656.2,1113.6 680.4,1133 690.1,1133 690.1,1162 694.9,1186.2 704.6,1198.3 707,1257" fill="none" stroke="#fff" stroke-width="1.8" stroke-linejoin="round" stroke-linecap="round" stroke-opacity="0.95"/>
<polyline points="680.4,1004.7 692.5,1012 704.6,1065.2 702.2,1089.4 690.1,1133" fill="none" stroke="#fff" stroke-width="1.8" stroke-linejoin="round" stroke-linecap="round" stroke-opacity="0.95"/>
<polyline points="680.4,982.9 711.9,1012 740.9,1012 772.4,1031.3 796.6,1045.8 815.9,1065.2 849.8,1065.2 859.5,1089.4 854.7,1125.7 825.6,1157.2 820.8,1186.2" fill="none" stroke="#fff" stroke-width="1.8" stroke-linejoin="round" stroke-linecap="round" stroke-opacity="0.95"/>
<polyline points="702.2,1074.9 728.8,1087 748.2,1084.6 753,1074.9 801.4,1070 849.8,1065.2" fill="none" stroke="#fff" stroke-width="1.8" stroke-linejoin="round" stroke-linecap="round" stroke-opacity="0.95"/>
<polyline points="578.8,1087 578.8,1118.5 593.3,1137.8 593.3,1157.2 619.9,1176.5 668.3,1198.3 699.8,1191" fill="none" stroke="#fff" stroke-width="1.8" stroke-linejoin="round" stroke-linecap="round" stroke-opacity="0.95"/>
<polyline points="610.2,1212.8 619.9,1210.4 651.4,1220.1 665.9,1217.7 692.5,1224.9 728.8,1229.8 753,1239.5 772.4,1257" fill="none" stroke="#fff" stroke-width="1.8" stroke-linejoin="round" stroke-linecap="round" stroke-opacity="0.95"/>
<polyline points="728.8,920 740.9,951.5 760.3,975.7 789.3,968.4 803.8,995 808.7,1009.5" fill="none" stroke="#fff" stroke-width="1.8" stroke-linejoin="round" stroke-linecap="round" stroke-opacity="0.95"/>
<polyline points="694.9,1169.3 753,1166.8 820.8,1181.4 830.5,1198.3 873.6,1195.8 909.9,1179.5 946.2,1161.3 1000.6,1150.4 1055,1143.2 1091.4,1132.3 1127.7,1125" fill="none" stroke="#fff" stroke-width="1.8" stroke-linejoin="round" stroke-linecap="round" stroke-opacity="0.95"/>
<polyline points="895.3,823.6 909.9,878 924.4,932.6 946.2,968.9 968,1005.2 982.5,1041.5 1000.6,1077.8 1018.8,1114 1055,1132.3" fill="none" stroke="#fff" stroke-width="1.8" stroke-linejoin="round" stroke-linecap="round" stroke-opacity="0.95"/>
<polyline points="851.8,1034.2 880,1060 900,1100 920,1140 940,1200 960,1257" fill="none" stroke="#fff" stroke-width="1.8" stroke-linejoin="round" stroke-linecap="round" stroke-opacity="0.95"/>
<polyline points="780,460 820,455 860,460 900,470" fill="none" stroke="#fff" stroke-width="1.8" stroke-linejoin="round" stroke-linecap="round" stroke-opacity="0.95"/>
<polyline points="800,300 830,310 860,330 900,350 940,380 970,400" fill="none" stroke="#fff" stroke-width="1.8" stroke-linejoin="round" stroke-linecap="round" stroke-opacity="0.95"/>
<polyline points="920,246 925,300 925,400 930,470" fill="none" stroke="#fff" stroke-width="1.8" stroke-linejoin="round" stroke-linecap="round" stroke-opacity="0.95"/>
<polyline points="530,790 545,805 560,812 575,808 590,818 610,815 630,830 650,845" fill="none" stroke="#fff" stroke-width="1.8" stroke-linejoin="round" stroke-linecap="round" stroke-opacity="0.95"/>
<polyline points="560,830 575,850 600,860 620,875" fill="none" stroke="#fff" stroke-width="1.8" stroke-linejoin="round" stroke-linecap="round" stroke-opacity="0.95"/>
<polyline points="640,840 660,860 690,870 720,860 745,875" fill="none" stroke="#fff" stroke-width="1.8" stroke-linejoin="round" stroke-linecap="round" stroke-opacity="0.95"/>
<polyline points="850,700 870,720 880,740 900,750 930,745" fill="none" stroke="#fff" stroke-width="1.8" stroke-linejoin="round" stroke-linecap="round" stroke-opacity="0.95"/>
<polyline points="860,690 880,680 905,700 930,705 960,700" fill="none" stroke="#fff" stroke-width="1.8" stroke-linejoin="round" stroke-linecap="round" stroke-opacity="0.95"/>
<rect x="352.8" y="253.2" width="25.2" height="14.5" rx="7" fill="#fff" stroke="#5a5c5e" stroke-width="1.1"/>
<text x="365.4" y="264.5" font-size="11" fill="#3a3b3d" text-anchor="middle" class="sh">119</text>
<rect x="590.0" y="329.2" width="20.0" height="14.5" rx="7" fill="#fff" stroke="#5a5c5e" stroke-width="1.1"/>
<text x="600.0" y="340.5" font-size="11" fill="#3a3b3d" text-anchor="middle" class="sh">72</text>
<rect x="423.5" y="456.1" width="24.5" height="14.5" rx="7" fill="#fff" stroke="#5a5c5e" stroke-width="1.1"/>
<text x="435.8" y="467.4" font-size="11" fill="#3a3b3d" text-anchor="middle" class="sh">119</text>
<rect x="462.6" y="677.3" width="24.3" height="14.5" rx="7" fill="#fff" stroke="#5a5c5e" stroke-width="1.1"/>
<text x="474.8" y="688.5" font-size="11" fill="#3a3b3d" text-anchor="middle" class="sh">119</text>
<rect x="306.5" y="747.4" width="23.0" height="14.5" rx="7" fill="#fff" stroke="#5a5c5e" stroke-width="1.1"/>
<text x="318.0" y="758.6" font-size="11" fill="#3a3b3d" text-anchor="middle" class="sh">103</text>
<path d="M495.6,751.5 Q504.6,749.5 513.6,751.5 L513.6,758.5 Q513.6,765.5 504.6,767.5 Q495.6,765.5 495.6,758.5 Z" fill="#6f7274"/>
<text x="504.6" y="764.5" font-size="11.5" font-weight="700" fill="#fff" text-anchor="middle" class="sh2">70</text>
<rect x="868.5" y="239.2" width="23.9" height="14.5" rx="7" fill="#fff" stroke="#5a5c5e" stroke-width="1.1"/>
<text x="880.5" y="250.5" font-size="11" fill="#3a3b3d" text-anchor="middle" class="sh">170</text>
<rect x="818.9" y="275.4" width="19.9" height="14.5" rx="7" fill="#fff" stroke="#5a5c5e" stroke-width="1.1"/>
<text x="828.8" y="286.6" font-size="11" fill="#3a3b3d" text-anchor="middle" class="sh">93</text>
<rect x="838.0" y="327.6" width="24.3" height="14.5" rx="7" fill="#fff" stroke="#5a5c5e" stroke-width="1.1"/>
<text x="850.1" y="338.8" font-size="11" fill="#3a3b3d" text-anchor="middle" class="sh">128</text>
<rect x="1014.6" y="337.3" width="24.3" height="14.5" rx="7" fill="#fff" stroke="#5a5c5e" stroke-width="1.1"/>
<text x="1026.8" y="348.6" font-size="11" fill="#3a3b3d" text-anchor="middle" class="sh">128</text>
<path d="M1066.3,265.8 C1070.2,263.6 1074.0,263.6 1077.4,265.1 C1080.9,263.6 1084.7,263.6 1088.6,265.8 L1088.9,271.0 C1089.6,276.6 1082.8,279.2 1077.4,281.8 C1072.1,279.2 1065.3,276.6 1066.0,271.0 Z" fill="#fff" stroke="#5a5c5e" stroke-width="1.1"/>
<text x="1077.4" y="276.7" font-size="11" fill="#3a3b3d" text-anchor="middle" class="sh">287</text>
<rect x="810.9" y="393.6" width="19.9" height="14.5" rx="7" fill="#fff" stroke="#5a5c5e" stroke-width="1.1"/>
<text x="820.8" y="404.9" font-size="11" fill="#3a3b3d" text-anchor="middle" class="sh">93</text>
<rect x="1056.3" y="383.0" width="24.2" height="14.5" rx="7" fill="#fff" stroke="#5a5c5e" stroke-width="1.1"/>
<text x="1068.4" y="394.2" font-size="11" fill="#3a3b3d" text-anchor="middle" class="sh">121</text>
<path d="M1178.6,377.3 C1182.4,375.1 1186.1,375.1 1189.3,376.6 C1192.6,375.1 1196.3,375.1 1200.1,377.3 L1200.3,382.5 C1201.0,388.1 1194.5,390.7 1189.3,393.2 C1184.2,390.7 1177.7,388.1 1178.4,382.5 Z" fill="#fff" stroke="#5a5c5e" stroke-width="1.1"/>
<text x="1189.3" y="388.2" font-size="11" fill="#3a3b3d" text-anchor="middle" class="sh">287</text>
<rect x="851.5" y="454.4" width="19.9" height="14.5" rx="7" fill="#fff" stroke="#5a5c5e" stroke-width="1.1"/>
<text x="861.5" y="465.7" font-size="11" fill="#3a3b3d" text-anchor="middle" class="sh">72</text>
<rect x="1132.4" y="554.1" width="19.2" height="14.5" rx="7" fill="#fff" stroke="#5a5c5e" stroke-width="1.1"/>
<text x="1142.0" y="565.3" font-size="11" fill="#3a3b3d" text-anchor="middle" class="sh">95</text>
<path d="M1178.0,554.7 C1181.8,552.5 1185.7,552.5 1189.1,553.9 C1192.5,552.5 1196.4,552.5 1200.2,554.7 L1200.5,559.9 C1201.2,565.4 1194.4,568.0 1189.1,570.6 C1183.8,568.0 1177.0,565.4 1177.7,559.9 Z" fill="#fff" stroke="#5a5c5e" stroke-width="1.1"/>
<text x="1189.1" y="565.5" font-size="11" fill="#3a3b3d" text-anchor="middle" class="sh">287</text>
<rect x="832.6" y="607.5" width="19.6" height="14.5" rx="7" fill="#fff" stroke="#5a5c5e" stroke-width="1.1"/>
<text x="842.4" y="618.8" font-size="11" fill="#3a3b3d" text-anchor="middle" class="sh">93</text>
<path d="M1034.5,630.9 Q1043.5,628.9 1052.5,630.9 L1052.5,637.9 Q1052.5,644.9 1043.5,646.9 Q1034.5,644.9 1034.5,637.9 Z" fill="#6f7274"/>
<text x="1043.5" y="643.9" font-size="11.5" font-weight="700" fill="#fff" text-anchor="middle" class="sh2">70</text>
<path d="M1176.0,630.9 Q1185.0,628.9 1194.0,630.9 L1194.0,637.9 Q1194.0,644.9 1185.0,646.9 Q1176.0,644.9 1176.0,637.9 Z" fill="#6f7274"/>
<text x="1185.0" y="643.9" font-size="11.5" font-weight="700" fill="#fff" text-anchor="middle" class="sh2">70</text>
<rect x="889.5" y="664.5" width="20.0" height="14.5" rx="7" fill="#fff" stroke="#5a5c5e" stroke-width="1.1"/>
<text x="899.5" y="675.8" font-size="11" fill="#3a3b3d" text-anchor="middle" class="sh">58</text>
<path d="M1178.0,667.0 C1181.8,664.8 1185.7,664.8 1189.1,666.3 C1192.5,664.8 1196.4,664.8 1200.2,667.0 L1200.5,672.2 C1201.2,677.7 1194.4,680.3 1189.1,682.9 C1183.8,680.3 1177.0,677.7 1177.7,672.2 Z" fill="#fff" stroke="#5a5c5e" stroke-width="1.1"/>
<text x="1189.1" y="677.9" font-size="11" fill="#3a3b3d" text-anchor="middle" class="sh">287</text>
<rect x="1080.9" y="692.5" width="24.3" height="14.5" rx="7" fill="#fff" stroke="#5a5c5e" stroke-width="1.1"/>
<text x="1093.1" y="703.8" font-size="11" fill="#3a3b3d" text-anchor="middle" class="sh">121</text>
<path d="M703.8,716.0 C707.6,713.8 711.4,713.8 714.6,715.3 C717.9,713.8 721.7,713.8 725.5,716.0 L725.7,721.2 C726.4,726.7 719.8,729.3 714.6,731.9 C709.5,729.3 702.9,726.7 703.6,721.2 Z" fill="#fff" stroke="#5a5c5e" stroke-width="1.1"/>
<text x="714.6" y="726.9" font-size="11" fill="#3a3b3d" text-anchor="middle" class="sh">6</text>
<rect x="255.5" y="878.6" width="23.9" height="14.5" rx="7" fill="#fff" stroke="#5a5c5e" stroke-width="1.1"/>
<text x="267.4" y="889.9" font-size="11" fill="#3a3b3d" text-anchor="middle" class="sh">103</text>
<rect x="476.6" y="850.3" width="23.6" height="14.5" rx="7" fill="#fff" stroke="#5a5c5e" stroke-width="1.1"/>
<text x="488.4" y="861.6" font-size="11" fill="#3a3b3d" text-anchor="middle" class="sh">103</text>
<rect x="621.9" y="909.5" width="19.2" height="14.5" rx="7" fill="#fff" stroke="#5a5c5e" stroke-width="1.1"/>
<text x="631.5" y="920.8" font-size="11" fill="#3a3b3d" text-anchor="middle" class="sh">74</text>
<rect x="174.0" y="1012.1" width="19.4" height="14.5" rx="7" fill="#fff" stroke="#5a5c5e" stroke-width="1.1"/>
<text x="183.7" y="1023.4" font-size="11" fill="#3a3b3d" text-anchor="middle" class="sh">5</text>
<rect x="764.6" y="894.5" width="18.9" height="14.5" rx="7" fill="#fff" stroke="#5a5c5e" stroke-width="1.1"/>
<text x="774.0" y="905.7" font-size="11" fill="#3a3b3d" text-anchor="middle" class="sh">74</text>
<rect x="944.4" y="909.9" width="18.1" height="14.5" rx="7" fill="#fff" stroke="#5a5c5e" stroke-width="1.1"/>
<text x="953.5" y="921.2" font-size="11" fill="#3a3b3d" text-anchor="middle" class="sh">8</text>
<rect x="940.7" y="963.5" width="24.3" height="14.5" rx="7" fill="#fff" stroke="#5a5c5e" stroke-width="1.1"/>
<text x="952.9" y="974.7" font-size="11" fill="#3a3b3d" text-anchor="middle" class="sh">470</text>
<path d="M985.3,952.8 C989.2,950.6 993.0,950.6 996.5,952.1 C999.9,950.6 1003.7,950.6 1007.6,952.8 L1007.9,958.0 C1008.6,963.6 1001.8,966.2 996.5,968.8 C991.1,966.2 984.3,963.6 985.0,958.0 Z" fill="#fff" stroke="#5a5c5e" stroke-width="1.1"/>
<text x="996.5" y="963.7" font-size="11" fill="#3a3b3d" text-anchor="middle" class="sh">285</text>
<rect x="1018.0" y="844.2" width="23.7" height="14.5" rx="7" fill="#fff" stroke="#5a5c5e" stroke-width="1.1"/>
<text x="1029.8" y="855.4" font-size="11" fill="#3a3b3d" text-anchor="middle" class="sh">391</text>
<path d="M1137.7,762.4 C1141.5,760.2 1145.3,760.2 1148.6,761.7 C1151.9,760.2 1155.7,760.2 1159.5,762.4 L1159.7,767.6 C1160.4,773.2 1153.8,775.8 1148.6,778.4 C1143.4,775.8 1136.8,773.2 1137.5,767.6 Z" fill="#fff" stroke="#5a5c5e" stroke-width="1.1"/>
<text x="1148.6" y="773.3" font-size="11" fill="#3a3b3d" text-anchor="middle" class="sh">6</text>
<rect x="1178.6" y="793.8" width="18.8" height="14.5" rx="7" fill="#fff" stroke="#5a5c5e" stroke-width="1.1"/>
<text x="1188.0" y="805.1" font-size="11" fill="#3a3b3d" text-anchor="middle" class="sh">26</text>
<path d="M1212.0,774.4 Q1221.0,772.4 1230.0,774.4 L1230.0,781.4 Q1230.0,788.4 1221.0,790.4 Q1212.0,788.4 1212.0,781.4 Z" fill="#6f7274"/>
<text x="1221.0" y="787.4" font-size="11.5" font-weight="700" fill="#fff" text-anchor="middle" class="sh2">25</text>
<path d="M1206.7,972.2 C1210.4,970.0 1214.0,970.0 1217.2,971.4 C1220.5,970.0 1224.1,970.0 1227.8,972.2 L1228.0,977.4 C1228.7,982.9 1222.3,985.5 1217.2,988.1 C1212.2,985.5 1205.8,982.9 1206.5,977.4 Z" fill="#fff" stroke="#5a5c5e" stroke-width="1.1"/>
<text x="1217.2" y="983.0" font-size="11" fill="#3a3b3d" text-anchor="middle" class="sh">85</text>
<rect x="1065.3" y="1027.0" width="24.3" height="14.5" rx="7" fill="#fff" stroke="#5a5c5e" stroke-width="1.1"/>
<text x="1077.4" y="1038.2" font-size="11" fill="#3a3b3d" text-anchor="middle" class="sh">121</text>
<rect x="1180.4" y="1121.0" width="23.6" height="14.5" rx="7" fill="#fff" stroke="#5a5c5e" stroke-width="1.1"/>
<text x="1192.2" y="1132.3" font-size="11" fill="#3a3b3d" text-anchor="middle" class="sh">470</text>
<rect x="1066.0" y="1244.7" width="23.6" height="14.5" rx="7" fill="#fff" stroke="#5a5c5e" stroke-width="1.1"/>
<text x="1077.8" y="1255.9" font-size="11" fill="#3a3b3d" text-anchor="middle" class="sh">121</text>
<path d="M998.0,762.8 C1001.8,760.6 1005.6,760.6 1009.0,762.1 C1012.4,760.6 1016.2,760.6 1020.0,762.8 L1020.3,768.0 C1021.0,773.6 1014.3,776.2 1009.0,778.8 C1003.7,776.2 997.0,773.6 997.7,768.0 Z" fill="#fff" stroke="#5a5c5e" stroke-width="1.1"/>
<text x="1009.0" y="773.7" font-size="11" fill="#3a3b3d" text-anchor="middle" class="sh">6</text>
<path d="M918.0,759.5 Q927.0,757.5 936.0,759.5 L936.0,766.5 Q936.0,773.5 927.0,775.5 Q918.0,773.5 918.0,766.5 Z" fill="#6f7274"/>
<text x="927.0" y="772.5" font-size="11.5" font-weight="700" fill="#fff" text-anchor="middle" class="sh2">70</text>
<text x="361.0" y="248.1" font-size="13.87" font-weight="400" fill="#3c3d3f" text-anchor="middle" class="lb">Nederland</text>
<text x="499.3" y="314.6" font-size="14.51" font-weight="400" fill="#3c3d3f" text-anchor="middle" class="lb">Pinecliffe</text>
<text x="376.7" y="346.8" font-size="13.97" font-weight="400" fill="#3c3d3f" text-anchor="middle" class="lb">Rollinsville</text>
<text x="230.0" y="370.6" font-size="14.52" font-weight="400" fill="#3c3d3f" text-anchor="middle" class="lb">Tolland</text>
<text x="456.6" y="390.3" font-size="16.48" font-weight="400" fill="#606367" text-anchor="middle" class="lb">Thorodin</text>
<text x="456.6" y="406.8" font-size="16.48" font-weight="400" fill="#606367" text-anchor="middle" class="lb">Mountain</text>
<text x="626.4" y="362.7" font-size="13.35" font-weight="400" fill="#3c3d3f" text-anchor="middle" class="lb">Coal Creek</text>
<text x="638.8" y="419.4" font-size="9.19" font-weight="700" letter-spacing="1.10" fill="#4b4d50" text-anchor="middle" class="lb">COAL CREEK</text>
<text x="638.8" y="429.3" font-size="9.19" font-weight="700" letter-spacing="1.10" fill="#4b4d50" text-anchor="middle" class="lb">CANYON</text>
<text x="232.7" y="438.9" font-size="16.28" font-weight="400" fill="#606367" text-anchor="middle" class="lb">Dakota Hill</text>
<text x="515.9" y="502.2" font-size="15.98" font-weight="400" fill="#606367" text-anchor="middle" class="lb">Golden Gate</text>
<text x="515.9" y="518.2" font-size="15.98" font-weight="400" fill="#606367" text-anchor="middle" class="lb">Canyon</text>
<text x="515.9" y="534.2" font-size="15.98" font-weight="400" fill="#606367" text-anchor="middle" class="lb">State Park</text>
<text x="475.1" y="582.1" font-size="16.04" font-weight="400" fill="#606367" text-anchor="middle" class="lb">Ely Hill</text>
<text x="389.6" y="613.3" font-size="14.09" font-weight="400" fill="#3c3d3f" text-anchor="middle" class="lb">Black Hawk</text>
<text x="656.8" y="617.0" font-size="9.17" font-weight="700" letter-spacing="1.10" fill="#4b4d50" text-anchor="middle" class="lb">GOLDEN GATE</text>
<text x="656.8" y="626.9" font-size="9.17" font-weight="700" letter-spacing="1.10" fill="#4b4d50" text-anchor="middle" class="lb">CANYON</text>
<text x="578.4" y="707.5" font-size="16.64" font-weight="400" fill="#606367" text-anchor="middle" class="lb">Centennial</text>
<text x="578.4" y="724.2" font-size="16.64" font-weight="400" fill="#606367" text-anchor="middle" class="lb">Cone Park</text>
<text x="578.4" y="740.8" font-size="16.64" font-weight="400" fill="#606367" text-anchor="middle" class="lb">West Trailhead</text>
<text x="267.5" y="685.4" font-size="13.87" font-weight="400" fill="#3c3d3f" text-anchor="end" class="lb">lle-Lawson-Dumont</text>
<text x="352.5" y="735.1" font-size="12.67" font-weight="400" fill="#3c3d3f" text-anchor="middle" class="lb">Idaho Springs</text>
<text x="944.8" y="268.8" font-size="13.89" font-weight="400" fill="#3c3d3f" text-anchor="middle" class="lb">Superior</text>
<text x="759.5" y="306.7" font-size="13.76" font-weight="400" fill="#3c3d3f" text-anchor="middle" class="lb">Eldorado</text>
<text x="759.5" y="321.2" font-size="13.76" font-weight="400" fill="#3c3d3f" text-anchor="middle" class="lb">Springs</text>
<text x="920.4" y="337.3" font-size="15.95" font-weight="400" fill="#606367" text-anchor="middle" class="lb">Rocky Flats</text>
<text x="920.4" y="353.3" font-size="15.95" font-weight="400" fill="#606367" text-anchor="middle" class="lb">National</text>
<text x="920.4" y="369.2" font-size="15.95" font-weight="400" fill="#606367" text-anchor="middle" class="lb">Wildlife</text>
<text x="920.4" y="385.2" font-size="15.95" font-weight="400" fill="#606367" text-anchor="middle" class="lb">Refuge</text>
<text x="1084.5" y="339.9" font-size="14.44" font-weight="400" fill="#3c3d3f" text-anchor="middle" class="lb">Broomfield</text>
<text x="1218.0" y="314.4" font-size="9.30" font-weight="700" letter-spacing="1.12" fill="#4b4d50" text-anchor="start" class="lb">NORTH</text>
<text x="1196.0" y="325.3" font-size="9.30" font-weight="700" letter-spacing="1.12" fill="#4b4d50" text-anchor="start" class="lb">WESTMINSTER</text>
<text x="1204.8" y="466.3" font-size="13.89" font-weight="400" fill="#3c3d3f" text-anchor="middle" class="lb">Federal</text>
<text x="1204.8" y="480.9" font-size="13.89" font-weight="400" fill="#3c3d3f" text-anchor="middle" class="lb">Heights</text>
<text x="1115.3" y="501.1" font-size="9.27" font-weight="700" letter-spacing="1.11" fill="#4b4d50" text-anchor="middle" class="lb">LAKE ARBOR</text>
<text x="1168.7" y="526.5" font-size="14.39" font-weight="400" fill="#3c3d3f" text-anchor="middle" class="lb">Westminster</text>
<text x="750.0" y="531.2" font-size="15.96" font-weight="400" fill="#606367" text-anchor="middle" class="lb">White</text>
<text x="750.0" y="547.2" font-size="15.96" font-weight="400" fill="#606367" text-anchor="middle" class="lb">Ranch Park</text>
<text x="968.4" y="557.5" font-size="9.58" font-weight="700" letter-spacing="1.15" fill="#4b4d50" text-anchor="middle" class="lb">RALSTON VALLEY</text>
<text x="1082.8" y="602.0" font-size="13.73" font-weight="400" fill="#3c3d3f" text-anchor="middle" class="lb">Arvada</text>
<text x="1100.3" y="682.9" font-size="13.60" font-weight="400" fill="#3c3d3f" text-anchor="middle" class="lb">Wheat Ridge</text>
<text x="855.1" y="706.3" font-size="13.46" font-weight="400" fill="#3c3d3f" text-anchor="middle" class="lb">Golden</text>
<text x="1014.2" y="723.4" font-size="9.41" font-weight="700" letter-spacing="1.13" fill="#4b4d50" text-anchor="middle" class="lb">APPLEWOOD</text>
<text x="1188.5" y="713.3" font-size="10.50" font-weight="700" letter-spacing="1.26" fill="#4b4d50" text-anchor="start" class="lb">UNION S</text>
<text x="366.6" y="824.9" font-size="16.77" font-weight="400" fill="#606367" text-anchor="end" class="lb">Chief</text>
<text x="366.6" y="841.7" font-size="16.77" font-weight="400" fill="#606367" text-anchor="end" class="lb">Mountain</text>
<text x="598.2" y="784.8" font-size="9.38" font-weight="700" letter-spacing="1.13" fill="#4b4d50" text-anchor="middle" class="lb">SODA CREEK</text>
<text x="598.2" y="795.0" font-size="9.38" font-weight="700" letter-spacing="1.13" fill="#4b4d50" text-anchor="middle" class="lb">AND M&amp;B</text>
<text x="641.5" y="869.1" font-size="10.19" font-weight="700" letter-spacing="1.22" fill="#4b4d50" text-anchor="middle" class="lb">TANOA &amp;</text>
<text x="641.5" y="880.1" font-size="10.19" font-weight="700" letter-spacing="1.22" fill="#4b4d50" text-anchor="middle" class="lb">HIWAN</text>
<text x="529.5" y="984.0" font-size="13.27" font-weight="400" fill="#3c3d3f" text-anchor="middle" class="lb">Upper</text>
<text x="529.5" y="997.9" font-size="13.27" font-weight="400" fill="#3c3d3f" text-anchor="middle" class="lb">Bear Creek</text>
<text x="628.6" y="1053.0" font-size="9.87" font-weight="700" letter-spacing="1.18" fill="#4b4d50" text-anchor="middle" class="lb">EVERGREEN</text>
<text x="628.6" y="1063.6" font-size="9.87" font-weight="700" letter-spacing="1.18" fill="#4b4d50" text-anchor="middle" class="lb">HEIGHTS</text>
<text x="628.6" y="1074.3" font-size="9.87" font-weight="700" letter-spacing="1.18" fill="#4b4d50" text-anchor="middle" class="lb">AND ESTATES</text>
<text x="580.7" y="1094.8" font-size="9.30" font-weight="700" letter-spacing="1.12" fill="#4b4d50" text-anchor="middle" class="lb">BROOK FOREST</text>
<text x="689.3" y="1091.9" font-size="9.46" font-weight="700" letter-spacing="1.14" fill="#4b4d50" text-anchor="middle" class="lb">EVERGREEN</text>
<text x="689.3" y="1102.1" font-size="9.46" font-weight="700" letter-spacing="1.14" fill="#4b4d50" text-anchor="middle" class="lb">MEADOWS</text>
<text x="340.4" y="1132.6" font-size="16.50" font-weight="400" fill="#606367" text-anchor="middle" class="lb">Meridian Hill</text>
<text x="598.3" y="1142.6" font-size="10.19" font-weight="700" letter-spacing="1.22" fill="#4b4d50" text-anchor="middle" class="lb">SHADOW</text>
<text x="598.3" y="1153.6" font-size="10.19" font-weight="700" letter-spacing="1.22" fill="#4b4d50" text-anchor="middle" class="lb">MOUNTAIN</text>
<text x="538.3" y="1179.0" font-size="16.75" font-weight="400" fill="#606367" text-anchor="end" class="lb">Black</text>
<text x="538.3" y="1195.8" font-size="16.75" font-weight="400" fill="#606367" text-anchor="end" class="lb">Mountain</text>
<text x="563.8" y="1245.9" font-size="16.34" font-weight="400" fill="#606367" text-anchor="middle" class="lb">Staunton</text>
<text x="563.8" y="1262.3" font-size="16.34" font-weight="400" fill="#606367" text-anchor="middle" class="lb">State Park</text>
<text x="713.8" y="809.8" font-size="15.63" font-weight="400" fill="#606367" text-anchor="middle" class="lb">Genesee Park</text>
<text x="773.0" y="852.3" font-size="13.43" font-weight="400" fill="#3c3d3f" text-anchor="middle" class="lb">Genesee</text>
<text x="708.7" y="893.6" font-size="9.35" font-weight="700" letter-spacing="1.12" fill="#4b4d50" text-anchor="middle" class="lb">KERR GULCH</text>
<text x="816.0" y="905.5" font-size="13.76" font-weight="400" fill="#3c3d3f" text-anchor="middle" class="lb">Idledale</text>
<text x="720.8" y="931.6" font-size="14.07" font-weight="400" fill="#3c3d3f" text-anchor="middle" class="lb">Kittredge</text>
<text x="906.2" y="932.9" font-size="14.37" font-weight="400" fill="#3c3d3f" text-anchor="middle" class="lb">Morrison</text>
<text x="848.1" y="955.1" font-size="16.06" font-weight="400" fill="#606367" text-anchor="middle" class="lb">Mount</text>
<text x="848.1" y="971.2" font-size="16.06" font-weight="400" fill="#606367" text-anchor="middle" class="lb">Falcon Park</text>
<text x="691.5" y="978.2" font-size="13.46" font-weight="400" fill="#3c3d3f" text-anchor="middle" class="lb">Evergreen</text>
<text x="1093.2" y="820.9" font-size="18.64" font-weight="400" fill="#1f2022" text-anchor="middle" class="lb">Lakewood</text>
<text x="1209.4" y="876.7" font-size="10.50" font-weight="700" letter-spacing="1.26" fill="#4b4d50" text-anchor="start" class="lb">SOUT</text>
<text x="1218.5" y="946.8" font-size="15.50" font-weight="400" fill="#3c3d3f" text-anchor="start" class="lb">En</text>
<text x="1161.9" y="964.1" font-size="9.49" font-weight="700" letter-spacing="1.14" fill="#4b4d50" text-anchor="middle" class="lb">FORT LOGAN</text>
<text x="827.3" y="1014.6" font-size="14.03" font-weight="400" fill="#3c3d3f" text-anchor="middle" class="lb">Indian Hills</text>
<text x="1204.0" y="1022.3" font-size="14.50" font-weight="400" fill="#3c3d3f" text-anchor="middle" class="lb">Littleton</text>
<text x="974.0" y="1044.1" font-size="13.62" font-weight="400" fill="#3c3d3f" text-anchor="middle" class="lb">Dakota Ridge</text>
<text x="1113.8" y="1078.1" font-size="13.91" font-weight="400" fill="#3c3d3f" text-anchor="middle" class="lb">Columbine</text>
<text x="1040.5" y="1103.6" font-size="13.23" font-weight="400" fill="#3c3d3f" text-anchor="middle" class="lb">Ken Caryl</text>
<text x="1122.0" y="1172.4" font-size="16.17" font-weight="400" fill="#606367" text-anchor="middle" class="lb">Chatfield</text>
<text x="1122.0" y="1188.6" font-size="16.17" font-weight="400" fill="#606367" text-anchor="middle" class="lb">State Park</text>
<text x="1175" y="1186.7" font-size="9.5" font-weight="700" letter-spacing="1.2" fill="#4b4d50" class="lb">W</text>
<text x="1219" y="1186.7" font-size="9.5" font-weight="700" letter-spacing="1.2" fill="#4b4d50" class="lb">IDG</text>
<text x="727.4" y="1177.8" font-size="13.70" font-weight="400" fill="#3c3d3f" text-anchor="middle" class="lb">Aspen Park</text>
<text x="888.3" y="1175.3" font-size="9.13" font-weight="700" letter-spacing="1.10" fill="#4b4d50" text-anchor="middle" class="lb">DEER CREEK</text>
<text x="833.8" y="1201.7" font-size="9.57" font-weight="700" letter-spacing="1.15" fill="#4b4d50" text-anchor="middle" class="lb">HILLDALE PINES</text>
<text x="708.6" y="1227.8" font-size="14.02" font-weight="400" fill="#3c3d3f" text-anchor="middle" class="lb">Conifer</text>
<text x="1171.6" y="1259.1" font-size="9.71" font-weight="700" letter-spacing="1.17" fill="#4b4d50" text-anchor="middle" class="lb">STERLING RANCH</text>
<text x="1201.0" y="749.9" font-size="30.00" font-weight="700" fill="#1f2022" text-anchor="start" class="lb">De</text>
<path d="M275.6,427.9 A11.9,11.9 0 1 1 299.5,427.9 C299.5,436.3 289.6,439.9 287.6,450.8 C285.6,439.9 275.6,436.3 275.6,427.9 Z" fill="#6e7173"/>
<path d="M280.1,431.9 L285.1,422.9 L287.6,426.9 L289.4,424.4 L295.1,431.9 Z" fill="#fff"/>
<path d="M494.0,388.4 A11.9,11.9 0 1 1 517.7,388.4 C517.7,396.6 507.9,400.2 505.9,409.0 C503.9,400.2 494.0,396.6 494.0,388.4 Z" fill="#6e7173"/>
<path d="M498.4,392.4 L503.4,383.4 L505.9,387.4 L507.7,384.9 L513.4,392.4 Z" fill="#fff"/>
<path d="M503.2,573.1 A11.8,11.8 0 1 1 526.8,573.1 C526.8,581.4 517.0,584.9 515.0,594.0 C513.0,584.9 503.2,581.4 503.2,573.1 Z" fill="#6e7173"/>
<path d="M507.5,577.1 L512.5,568.1 L515.0,572.1 L516.8,569.6 L522.5,577.1 Z" fill="#fff"/>
<path d="M327.7,859.0 A11.8,11.8 0 1 1 351.3,859.0 C351.3,867.3 341.5,870.8 339.5,881.7 C337.5,870.8 327.7,867.3 327.7,859.0 Z" fill="#6e7173"/>
<path d="M332.0,863.0 L337.0,854.0 L339.5,858.0 L341.3,855.5 L347.0,863.0 Z" fill="#fff"/>
<path d="M390.6,1122.1 A11.6,11.6 0 1 1 413.8,1122.1 C413.8,1130.2 404.2,1133.7 402.2,1145.0 C400.2,1133.7 390.6,1130.2 390.6,1122.1 Z" fill="#6e7173"/>
<path d="M394.7,1126.1 L399.7,1117.1 L402.2,1121.1 L404.0,1118.6 L409.7,1126.1 Z" fill="#fff"/>
<path d="M542.0,1176.4 A11.4,11.4 0 1 1 564.8,1176.4 C564.8,1184.4 555.4,1187.8 553.4,1199.4 C551.4,1187.8 542.0,1184.4 542.0,1176.4 Z" fill="#6e7173"/>
<path d="M545.9,1180.4 L550.9,1171.4 L553.4,1175.4 L555.2,1172.9 L560.9,1180.4 Z" fill="#fff"/>
<defs><linearGradient id="gu" gradientUnits="userSpaceOnUse" x1="148" y1="0" x2="1021" y2="0"><stop offset="0" stop-color="#5fb94f"/><stop offset="0.145" stop-color="#6ab84c"/><stop offset="0.19" stop-color="#b0904a"/><stop offset="0.23" stop-color="#ee7150"/><stop offset="0.36" stop-color="#f07250"/><stop offset="0.41" stop-color="#f08a48"/><stop offset="0.53" stop-color="#e8a848"/><stop offset="0.57" stop-color="#a8b04a"/><stop offset="0.64" stop-color="#5fb94f"/><stop offset="1" stop-color="#5fb94f"/></linearGradient><linearGradient id="gl" gradientUnits="userSpaceOnUse" x1="148" y1="0" x2="1021" y2="0"><stop offset="0" stop-color="#5fb94f"/><stop offset="0.145" stop-color="#6ab84c"/><stop offset="0.22" stop-color="#a8a048"/><stop offset="0.26" stop-color="#eca34a"/><stop offset="0.33" stop-color="#d8a84a"/><stop offset="0.38" stop-color="#9bb04b"/><stop offset="0.39" stop-color="#6ab84c"/><stop offset="0.53" stop-color="#8cb44b"/><stop offset="0.56" stop-color="#eea24a"/><stop offset="0.75" stop-color="#eea14a"/><stop offset="0.76" stop-color="#5fb94f"/><stop offset="1" stop-color="#5fb94f"/></linearGradient></defs>
<polyline points="140.0,685.0 148.0,683.4 161.8,677.6 179.7,672.6 205.4,668.9 244.5,671.2 265.2,678.8 274.0,686.8 297.4,697.1 308.8,707.5 327.2,720.1 350.2,724.7 368.6,722.4 397.8,728.6 419.1,721.3 444.4,717.8 460.5,719.0 469.7,724.7 490.8,725.4 501.9,721.3 508.8,744.2 520.2,764.9 535.9,777.6 566.5,791.8 598.0,799.6 619.8,803.7 649.0,819.0 672.0,831.7 683.4,826.0 688.0,816.8 701.8,805.3 708.7,801.8 736.2,804.1 759.2,814.5 786.8,821.4 809.8,826.0 823.6,828.7 839.6,834.0 848.8,828.3 862.6,835.1 878.7,845.5 890.2,837.4 901.7,809.9 912.0,793.1 918.0,782.0 925.0,775.5 935.0,771.5 950.0,769.0 972.0,767.6 1021.0,768.5" fill="none" stroke="#f4f4f4" stroke-opacity="0.6" stroke-width="10" stroke-linejoin="round"/>
<polyline points="139.5,682.4 147.2,680.8 160.9,675.0 179.1,670.0 205.3,666.2 245.1,668.5 266.6,676.4 275.5,684.5 298.9,694.8 310.5,705.4 328.3,717.6 350.3,722.0 368.7,719.7 397.6,725.8 418.5,718.7 444.3,715.1 461.4,716.4 470.5,722.0 490.4,722.7 503.7,717.8 511.3,743.1 522.3,763.1 537.3,775.3 567.4,789.2 598.6,797.0 620.7,801.1 650.3,816.6 672.1,828.7 681.4,824.0 685.8,815.1 700.3,803.0 708.2,799.0 736.9,801.4 760.1,811.9 787.4,818.8 810.3,823.4 824.3,826.1 839.3,831.0 848.7,825.2 863.9,832.7 878.6,842.2 888.0,835.6 899.3,808.7 909.7,791.8 915.8,780.3 923.5,773.2 934.3,768.9 949.7,766.3 971.9,764.9 1021.0,765.8" fill="none" stroke="url(#gu)" stroke-width="3.1" stroke-linejoin="round"/>
<polyline points="140.5,687.6 148.8,686.0 162.7,680.2 180.3,675.2 205.5,671.6 243.9,673.9 263.8,681.2 272.5,689.1 295.9,699.4 307.1,709.6 326.1,722.6 350.1,727.4 368.5,725.1 398.0,731.4 419.7,723.9 444.5,720.5 459.6,721.6 468.9,727.4 491.2,728.1 500.1,724.8 506.3,745.3 518.1,766.7 534.5,779.9 565.6,794.4 597.4,802.2 618.9,806.3 647.7,821.4 671.9,834.7 685.4,828.0 690.2,818.5 703.3,807.6 709.2,804.6 735.5,806.8 758.3,817.1 786.2,824.0 809.3,828.6 822.9,831.3 839.9,837.0 848.9,831.4 861.3,837.5 878.8,848.8 892.4,839.2 904.1,811.1 914.3,794.4 920.2,783.7 926.5,777.8 935.7,774.1 950.3,771.7 972.1,770.3 1021.0,771.2" fill="none" stroke="url(#gl)" stroke-width="3.1" stroke-linejoin="round"/>
<circle cx="179.7" cy="672.6" r="7" fill="#2f3032"/>
<circle cx="274" cy="686.8" r="7" fill="#2f3032"/>
<circle cx="397.8" cy="728.6" r="7" fill="#2f3032"/>
<circle cx="490.8" cy="725.4" r="7" fill="#2f3032"/>
<circle cx="535.9" cy="777.6" r="7" fill="#2f3032"/>
<circle cx="619.8" cy="803.7" r="7" fill="#2f3032"/>
<circle cx="708.7" cy="801.8" r="7" fill="#2f3032"/>
<circle cx="912" cy="793.1" r="7" fill="#2f3032"/>
<rect x="333.3" y="717.0" width="19.5" height="16.5" rx="4" fill="none" stroke="#0c0c0c" stroke-width="3"/>
<path d="M354.3,725.2 L359.5,719.8 L359.5,730.8 Z" fill="none" stroke="#0c0c0c" stroke-width="2.6" stroke-linejoin="round"/>
<rect x="545.2" y="775.5" width="19.2" height="17.8" rx="4" fill="none" stroke="#0c0c0c" stroke-width="3"/>
<path d="M565.9,784.4 L571.0,778.9 L571.0,789.9 Z" fill="none" stroke="#0c0c0c" stroke-width="2.6" stroke-linejoin="round"/>
<rect x="768.8" y="810.9" width="19.5" height="17.0" rx="4" fill="none" stroke="#0c0c0c" stroke-width="3"/>
<path d="M789.8,819.4 L795.0,813.9 L795.0,824.9 Z" fill="none" stroke="#0c0c0c" stroke-width="2.6" stroke-linejoin="round"/>
<rect x="970.2" y="761.0" width="19.6" height="17.3" rx="4" fill="none" stroke="#0c0c0c" stroke-width="3"/>
<path d="M991.3,769.6 L996.5,764.1 L996.5,775.1 Z" fill="none" stroke="#0c0c0c" stroke-width="2.6" stroke-linejoin="round"/>
<path d="M432.0,709.0 L445.2,731.3 L418.8,731.3 Z" fill="#ef9a45" stroke="#111" stroke-width="2.6" stroke-linejoin="round"/>
<path d="M432.0,716.5 V722.8" stroke="#111" stroke-width="2.6" stroke-linecap="round"/><circle cx="432.0" cy="727.0" r="1.5" fill="#111"/>
<circle cx="823.6" cy="828.7" r="13.8" fill="#4a7df0" fill-opacity="0.3"/>
<circle cx="823.6" cy="828.7" r="6.8" fill="#fff"/><circle cx="823.6" cy="828.7" r="5.3" fill="#3d77f0"/>
<rect x="148" y="246" width="1088" height="14" fill="url(#topsh)"/>
<rect x="1226" y="246" width="10" height="1011" fill="url(#rsh)"/>
<rect x="168.5" y="264" width="274.5" height="46" rx="23" fill="#fff" filter="url(#ds)"/>
<text x="187.5" y="294.3" font-size="18.3" fill="#a5a5a5" class="sh">Search</text>
<circle cx="414.5" cy="286" r="6.3" fill="none" stroke="#111" stroke-width="2"/><path d="M419 290.5 L423 294.5" stroke="#111" stroke-width="2.2" stroke-linecap="round"/>
<rect x="1106" y="266.3" width="108" height="32.5" rx="2" fill="#fff" filter="url(#ds)"/>
<rect x="1150" y="266.3" width="1" height="32.5" fill="#e6e6e6"/>
<text x="1115.2" y="288" font-size="12" font-weight="700" fill="#111" class="sh">Map</text>
<text x="1159.5" y="288" font-size="12.6" fill="#555" class="sh">Satellite</text>
<rect x="1182" y="1136.5" width="32" height="60.5" rx="2" fill="#fff" filter="url(#ds)"/>
<rect x="1188" y="1166" width="20" height="1" fill="#e6e6e6"/>
<path d="M1198 1145V1157M1192 1151H1204" stroke="#555" stroke-width="2"/><path d="M1192 1182H1204" stroke="#555" stroke-width="2"/>
<rect x="1182" y="1206" width="32" height="32" rx="2" fill="#fff" filter="url(#ds)"/>
<circle cx="1198" cy="1215.8" r="3.6" fill="#f9b81b" stroke="#c98a10" stroke-width="0.6"/><path d="M1194 1220.8 Q1198 1218.8 1202 1220.8 L1203.6 1228.2 L1202 1228.4 L1201.4 1225 L1201.4 1232.4 L1198.6 1232.4 L1198.6 1228 L1197.4 1228 L1197.4 1232.4 L1194.6 1232.4 L1194.6 1225 L1194 1228.4 L1192.4 1228.2 Z" fill="#f9b81b" stroke="#c98a10" stroke-width="0.6"/><path d="M1196.5 1220.5 L1198 1223 L1199.5 1220.5" fill="#e06a2a"/>
<rect x="148" y="1214" width="152.5" height="43" fill="#24272e"/>
<path d="M179.5 1227 L191.2 1233.3 L179.5 1239.6 L167.8 1233.3 Z" fill="none" stroke="#f4f5f8" stroke-width="2.5" stroke-linejoin="round"/><path d="M167.8 1238.6 L179.5 1244.6 L191.2 1238.6" fill="none" stroke="#f4f5f8" stroke-width="2.5" stroke-linejoin="round" stroke-linecap="round"/>
<text x="202.3" y="1240.8" font-size="12.8" fill="#f1f2f4" stroke="#f1f2f4" stroke-width="0.25" class="sh">Map Layers</text>
</g></svg></body></html>
